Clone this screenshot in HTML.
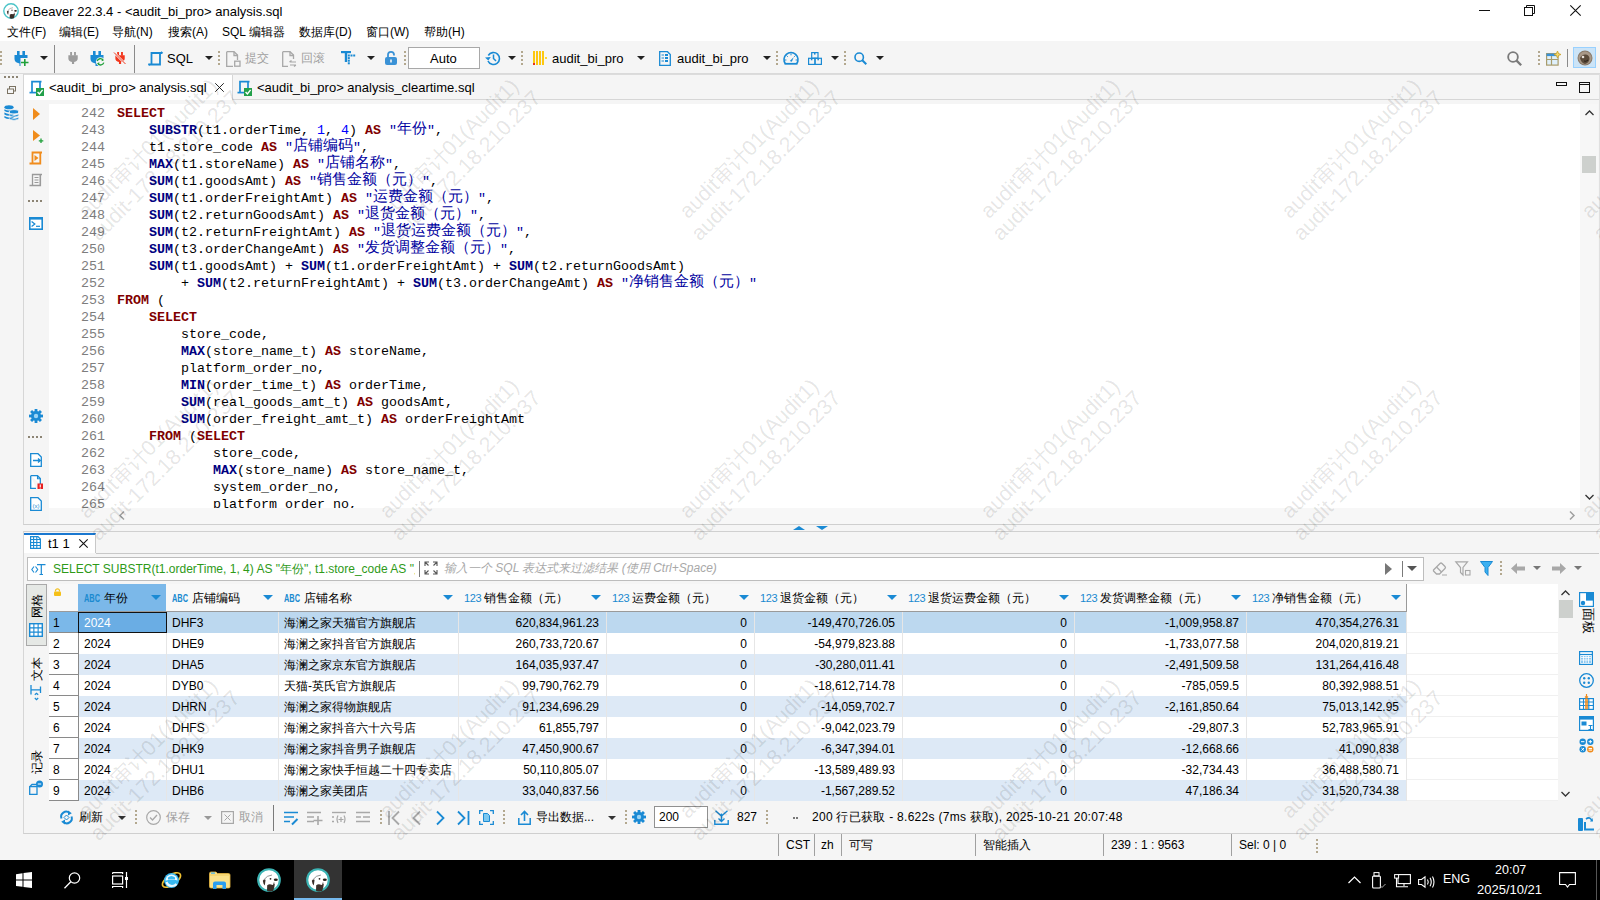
<!DOCTYPE html><html><head><meta charset="utf-8"><style>
*{box-sizing:border-box}
html,body{margin:0;padding:0}
body{width:1600px;height:900px;overflow:hidden;position:relative;background:#f5f5f5;font-family:"Liberation Sans",sans-serif;font-size:12px;color:#000}
.abs{position:absolute}
.t{position:absolute;white-space:nowrap;line-height:1.2}
.code{position:absolute;left:49px;top:104px;width:1531px;height:404px;background:#fff;overflow:hidden}
.ln{position:absolute;left:0;width:56px;text-align:right;font-family:"Liberation Mono",monospace;font-size:13.33px;color:#7d7d7d;line-height:17px;height:17px}
.cl{position:absolute;left:68px;font-family:"Liberation Mono",monospace;font-size:13.33px;color:#000;line-height:17px;height:17px;white-space:pre}
.k{color:#7f0000;font-weight:bold}
.f{color:#000080;font-weight:bold}
.s{color:#0000a0}
.n{color:#0000ff}
.cj{font-size:15px;letter-spacing:0;position:relative;top:-1px;}
.grid{position:absolute;left:49px;top:584px;width:1509px;height:217px;background:#fff;overflow:hidden}
.hc{position:absolute;top:0;height:28px;border-right:1px solid #9a9a9a;border-bottom:1px solid #9a9a9a;background:#f8f8f8}
.cell{position:absolute;height:21px;line-height:23px;white-space:nowrap;overflow:hidden;font-size:12px}
.ic{overflow:visible}
.wm{position:absolute;width:320px;height:47.2px;text-align:center;white-space:nowrap;font-size:21.3px;line-height:23.6px;color:rgba(0,0,0,0.11);transform-origin:50% 50%;transform:rotate(-45deg);pointer-events:none}
</style></head><body>
<div class="abs" style="left:0;top:0;width:1600px;height:41px;background:#fff"></div>
<svg class="ic" style="position:absolute;left:3px;top:3px;" width="16" height="16" viewBox="0 0 24 24"><circle cx="12" cy="12" r="10.8" fill="#fff" stroke="#4cc4c8" stroke-width="2.1"/><path d="M10.2 17.2 Q12.5 15.6 15.5 17 L17.8 15.8 Q17.6 19.5 16.2 23 Q12.5 24 10 22.8 Z" fill="#3a2e28"/><path d="M5.8 12.8 Q7 11 8.6 11.8 L7.8 17.5 Q6.4 16.5 5.8 12.8Z" fill="#3a2e28"/><ellipse cx="18.8" cy="11.8" rx="2" ry="1.3" fill="#2a2018"/><circle cx="13.5" cy="10.8" r="0.9" fill="#2a2018"/><path d="M6.8 11.8 Q10 7.3 15 7" stroke="#666" stroke-width="0.7" fill="none"/><path d="M17 14.5 L16.5 18" stroke="#3a2e28" stroke-width="0.8"/></svg>
<div class="t" style="left:23px;top:4px;font-size:13px;color:#000">DBeaver 22.3.4 - &lt;audit_bi_pro&gt; analysis.sql</div>
<svg class="ic" style="position:absolute;left:1479px;top:10px;" width="11" height="1" viewBox="0 0 11 1"><rect width="11" height="1" fill="#111"/></svg>
<svg class="ic" style="position:absolute;left:1524px;top:5px;" width="11" height="11" viewBox="0 0 11 11"><rect x="0.5" y="2.5" width="8" height="8" stroke="#111" fill="none"/><path d="M2.5 2.5V0.5H10.5V8.5H8.5" stroke="#111" fill="none"/></svg>
<svg class="ic" style="position:absolute;left:1570px;top:5px;" width="11" height="11" viewBox="0 0 11 11"><path d="M0.3 0.3L10.7 10.7M10.7 0.3L0.3 10.7" stroke="#111" stroke-width="1.1"/></svg>
<div class="t" style="left:7px;top:25px;font-size:12px">文件(F)</div>
<div class="t" style="left:59px;top:25px;font-size:12px">编辑(E)</div>
<div class="t" style="left:112px;top:25px;font-size:12px">导航(N)</div>
<div class="t" style="left:168px;top:25px;font-size:12px">搜索(A)</div>
<div class="t" style="left:222px;top:25px;font-size:12px">SQL 编辑器</div>
<div class="t" style="left:299px;top:25px;font-size:12px">数据库(D)</div>
<div class="t" style="left:366px;top:25px;font-size:12px">窗口(W)</div>
<div class="t" style="left:424px;top:25px;font-size:12px">帮助(H)</div>
<div class="abs" style="left:0;top:41px;width:1600px;height:33px;background:#f5f5f5;border-bottom:1px solid #dadada"></div>
<svg class="ic" style="position:absolute;left:0px;top:51px;" width="2" height="14" viewBox="0 0 2 14"><rect x="0" y="0" width="2" height="2" fill="#b3a88f"/><rect x="0" y="4" width="2" height="2" fill="#b3a88f"/><rect x="0" y="8" width="2" height="2" fill="#b3a88f"/><rect x="0" y="12" width="2" height="2" fill="#b3a88f"/></svg>
<svg class="ic" style="position:absolute;left:14px;top:51px;" width="15" height="15" viewBox="0 0 15 15"><rect x="3" y="0" width="2.6" height="4.5" fill="#1a8ad4"/><rect x="8.4" y="0" width="2.6" height="4.5" fill="#1a8ad4"/><path d="M0.5 4 H13.5 V8 Q13.5 11.5 8.5 12.5 V15 H5.5 V12.5 Q0.5 11.5 0.5 8 Z" fill="#1a8ad4"/><rect x="6.5" y="7" width="8.5" height="8" fill="#f5f5f5"/><path d="M10.8 8v7M7 11.5h7.5" stroke="#1fa03a" stroke-width="1.6"/></svg>
<svg class="ic" style="position:absolute;left:40px;top:56px;" width="8" height="4" viewBox="0 0 8 4"><path d="M0 0H8L4.0 4Z" fill="#222"/></svg>
<div style="position:absolute;left:54px;top:45px;width:1px;height:28px;background:#8a8a8a"></div>
<svg class="ic" style="position:absolute;left:68px;top:52px;" width="10" height="12" viewBox="0 0 10 12"><g transform="scale(0.72,0.8)"><rect x="3" y="0" width="2.6" height="4.5" fill="#9c9c9c"/><rect x="8.4" y="0" width="2.6" height="4.5" fill="#9c9c9c"/><path d="M0.5 4 H13.5 V8 Q13.5 11.5 8.5 12.5 V15 H5.5 V12.5 Q0.5 11.5 0.5 8 Z" fill="#9c9c9c"/></g></svg>
<svg class="ic" style="position:absolute;left:90px;top:51px;" width="15" height="15" viewBox="0 0 15 15"><rect x="3" y="0" width="2.6" height="4.5" fill="#1a8ad4"/><rect x="8.4" y="0" width="2.6" height="4.5" fill="#1a8ad4"/><path d="M0.5 4 H13.5 V8 Q13.5 11.5 8.5 12.5 V15 H5.5 V12.5 Q0.5 11.5 0.5 8 Z" fill="#1a8ad4"/><circle cx="10.5" cy="10.8" r="4.6" fill="#f5f5f5"/><path d="M7.2 10 A3.3 3.3 0 0 1 13 9" stroke="#1fa03a" stroke-width="1.4" fill="none"/><path d="M13.8 11.6 A3.3 3.3 0 0 1 8 12.6" stroke="#1fa03a" stroke-width="1.4" fill="none"/><path d="M12 7.5l2 1.8-2.4.9z M9 14l-2-1.8 2.4-.9z" fill="#1fa03a"/></svg>
<svg class="ic" style="position:absolute;left:114px;top:52px;" width="12" height="12" viewBox="0 0 12 12"><g transform="translate(1,0) scale(0.72,0.8)"><rect x="3" y="0" width="2.6" height="4.5" fill="#f2361c"/><rect x="8.4" y="0" width="2.6" height="4.5" fill="#f2361c"/><path d="M0.5 4 H13.5 V8 Q13.5 11.5 8.5 12.5 V15 H5.5 V12.5 Q0.5 11.5 0.5 8 Z" fill="#f2361c"/></g><path d="M0 0.5L11.5 12" stroke="#f5f5f5" stroke-width="2.2"/><path d="M0 0.5L11.5 12" stroke="#f2361c" stroke-width="1"/></svg>
<div style="position:absolute;left:134px;top:45px;width:1px;height:28px;background:#8a8a8a"></div>
<svg class="ic" style="position:absolute;left:148px;top:51px;" width="15" height="15" viewBox="0 0 15 15"><path d="M3.5 13 V2 H14" stroke="#1a8ad4" stroke-width="1.8" fill="none"/><path d="M12 2 V13.5 H0.5" stroke="#1a8ad4" stroke-width="1.8" fill="none"/><path d="M13 0.8 l1.8 1.4" stroke="#1a8ad4" stroke-width="1.2"/><path d="M0.5 12.8 l1.2 1.6" stroke="#1a8ad4" stroke-width="1.2"/></svg>
<div class="t" style="left:167px;top:51px;font-size:13px">SQL</div>
<svg class="ic" style="position:absolute;left:205px;top:56px;" width="8" height="4" viewBox="0 0 8 4"><path d="M0 0H8L4.0 4Z" fill="#222"/></svg>
<svg class="ic" style="position:absolute;left:218px;top:51px;" width="2" height="14" viewBox="0 0 2 14"><rect x="0" y="0" width="2" height="2" fill="#b3a88f"/><rect x="0" y="4" width="2" height="2" fill="#b3a88f"/><rect x="0" y="8" width="2" height="2" fill="#b3a88f"/><rect x="0" y="12" width="2" height="2" fill="#b3a88f"/></svg>
<svg class="ic" style="position:absolute;left:226px;top:51px;" width="15" height="16" viewBox="0 0 15 16"><path d="M0.7 0.7H8L11.5 4V9M7 15.3H0.7V0.7" stroke="#a8a8a8" stroke-width="1.3" fill="none"/><path d="M8 0.7V4.5H11.5" stroke="#a8a8a8" stroke-width="1.3" fill="none"/><rect x="8.7" y="10.2" width="5.3" height="5" stroke="#a8a8a8" stroke-width="1.3" fill="none"/></svg>
<div class="t" style="left:245px;top:51px;font-size:12px;color:#a0a0a0">提交</div>
<svg class="ic" style="position:absolute;left:282px;top:51px;" width="15" height="16" viewBox="0 0 15 16"><path d="M0.7 0.7H8L11.5 4V8M6 15.3H0.7V0.7" stroke="#a8a8a8" stroke-width="1.3" fill="none"/><path d="M8 0.7V4.5H11.5" stroke="#a8a8a8" stroke-width="1.3" fill="none"/><path d="M7.5 11H14M7.5 11l2-1.5M8 14H14M14 14l-2 1.5" stroke="#a8a8a8" stroke-width="1.2" fill="none"/></svg>
<div class="t" style="left:301px;top:51px;font-size:12px;color:#a0a0a0">回滚</div>
<svg class="ic" style="position:absolute;left:341px;top:51px;" width="15" height="15" viewBox="0 0 15 15"><rect x="0" y="0" width="10" height="2.2" fill="#1a8ad4"/><rect x="3.8" y="0" width="2.4" height="11" fill="#1a8ad4"/><rect x="6.8" y="3.5" width="2" height="2" fill="#1a8ad4"/><rect x="6.8" y="6.1" width="2" height="2" fill="#1a8ad4"/><rect x="6.8" y="8.7" width="2" height="2" fill="#1a8ad4"/><rect x="6.8" y="11.3" width="2" height="2" fill="#1a8ad4"/><rect x="9.5" y="3.5" width="2" height="2" fill="#1a8ad4"/><rect x="12.2" y="3.5" width="2" height="2" fill="#1a8ad4"/></svg>
<svg class="ic" style="position:absolute;left:367px;top:56px;" width="8" height="4" viewBox="0 0 8 4"><path d="M0 0H8L4.0 4Z" fill="#222"/></svg>
<svg class="ic" style="position:absolute;left:385px;top:51px;" width="12" height="14" viewBox="0 0 12 14"><path d="M3 6 V3.8 A3 3 0 0 1 9 3.8 V4.5" stroke="#3a92d6" stroke-width="1.8" fill="none"/><rect x="0" y="6" width="12" height="8" rx="2" fill="#3a92d6"/><rect x="5.2" y="8.5" width="1.6" height="3" fill="#f5f5f5"/></svg>
<svg class="ic" style="position:absolute;left:404px;top:51px;" width="2" height="14" viewBox="0 0 2 14"><rect x="0" y="0" width="2" height="2" fill="#b3a88f"/><rect x="0" y="4" width="2" height="2" fill="#b3a88f"/><rect x="0" y="8" width="2" height="2" fill="#b3a88f"/><rect x="0" y="12" width="2" height="2" fill="#b3a88f"/></svg>
<div class="abs" style="left:408px;top:47px;width:72px;height:22px;background:#fff;border:1px solid #a8a8a8"></div>
<div class="t" style="left:430px;top:51px;font-size:13px">Auto</div>
<svg class="ic" style="position:absolute;left:484px;top:51px;" width="16" height="15" viewBox="-1 0 16 15"><path d="M3.3 4.5 A6 6 0 1 1 3 10" stroke="#1a8ad4" stroke-width="1.6" fill="none"/><path d="M0 6.5 L3.3 9.5 L5.8 6 Z" fill="#1a8ad4"/><path d="M8.5 3.5V7.5L11 10" stroke="#1a8ad4" stroke-width="1.5" fill="none"/></svg>
<svg class="ic" style="position:absolute;left:508px;top:56px;" width="8" height="4" viewBox="0 0 8 4"><path d="M0 0H8L4.0 4Z" fill="#222"/></svg>
<svg class="ic" style="position:absolute;left:521px;top:51px;" width="2" height="14" viewBox="0 0 2 14"><rect x="0" y="0" width="2" height="2" fill="#b3a88f"/><rect x="0" y="4" width="2" height="2" fill="#b3a88f"/><rect x="0" y="8" width="2" height="2" fill="#b3a88f"/><rect x="0" y="12" width="2" height="2" fill="#b3a88f"/></svg>
<svg class="ic" style="position:absolute;left:533px;top:51px;" width="14" height="14" viewBox="0 0 14 14"><rect x="0" y="0" width="2" height="14" fill="#fdc810"/><rect x="3" y="0" width="2" height="14" fill="#fdc810"/><rect x="6" y="0" width="2" height="14" fill="#fdc810"/><rect x="9" y="0" width="2" height="14" fill="#fdc810"/><rect x="0" y="12" width="2" height="2" fill="#e8301c"/><rect x="12" y="6" width="2" height="2" fill="#fdd830"/></svg>
<div class="t" style="left:552px;top:51px;font-size:13px">audit_bi_pro</div>
<svg class="ic" style="position:absolute;left:637px;top:56px;" width="8" height="4" viewBox="0 0 8 4"><path d="M0 0H8L4.0 4Z" fill="#222"/></svg>
<svg class="ic" style="position:absolute;left:659px;top:51px;" width="12" height="15" viewBox="0 0 12 15"><path d="M0.7 0.7H8.5L11.3 3.5V14.3H0.7Z" stroke="#1a8ad4" stroke-width="1.3" fill="none"/><path d="M2.5 4h2.5M2.5 7h2.5M2.5 10h2.5" stroke="#1a8ad4" stroke-width="1.2"/><rect x="6" y="3" width="3" height="2" fill="#1a8ad4"/><rect x="6" y="6" width="3" height="2" fill="#1a8ad4"/><rect x="6" y="9" width="3" height="2" fill="#1a8ad4"/></svg>
<div class="t" style="left:677px;top:51px;font-size:13px">audit_bi_pro</div>
<svg class="ic" style="position:absolute;left:763px;top:56px;" width="8" height="4" viewBox="0 0 8 4"><path d="M0 0H8L4.0 4Z" fill="#222"/></svg>
<svg class="ic" style="position:absolute;left:776px;top:51px;" width="2" height="14" viewBox="0 0 2 14"><rect x="0" y="0" width="2" height="2" fill="#b3a88f"/><rect x="0" y="4" width="2" height="2" fill="#b3a88f"/><rect x="0" y="8" width="2" height="2" fill="#b3a88f"/><rect x="0" y="12" width="2" height="2" fill="#b3a88f"/></svg>
<svg class="ic" style="position:absolute;left:783px;top:51px;" width="16" height="14" viewBox="0 0 16 14"><path d="M2.3 12.6 A7 7 0 1 1 13.7 12.6" stroke="#1a8ad4" stroke-width="1.6" fill="none"/><path d="M1.5 12.8H14.5" stroke="#1a8ad4" stroke-width="1.8"/><path d="M8 2.5v1.8M3.6 4.6l1.2 1.2M12.4 4.6l-1.2 1.2M1.8 9h1.6M12.6 9h1.6" stroke="#1a8ad4" stroke-width="1"/><path d="M6.8 10 L10.8 6 L8.8 10.8Z" fill="#1a8ad4"/></svg>
<svg class="ic" style="position:absolute;left:808px;top:52px;" width="14" height="13" viewBox="0 0 14 13"><rect x="3.7" y="0.6" width="6.3" height="5.6" stroke="#1a8ad4" stroke-width="1.2" fill="none"/><rect x="0.6" y="6.3" width="6.4" height="6.1" stroke="#1a8ad4" stroke-width="1.2" fill="none"/><rect x="7" y="6.3" width="6.4" height="6.1" stroke="#1a8ad4" stroke-width="1.2" fill="none"/><rect x="6" y="0.6" width="1.5" height="2" fill="#1a8ad4"/><rect x="2.9" y="6.3" width="1.5" height="2" fill="#1a8ad4"/><rect x="9.4" y="6.3" width="1.5" height="2" fill="#1a8ad4"/></svg>
<svg class="ic" style="position:absolute;left:831px;top:56px;" width="8" height="4" viewBox="0 0 8 4"><path d="M0 0H8L4.0 4Z" fill="#222"/></svg>
<svg class="ic" style="position:absolute;left:844px;top:51px;" width="2" height="14" viewBox="0 0 2 14"><rect x="0" y="0" width="2" height="2" fill="#b3a88f"/><rect x="0" y="4" width="2" height="2" fill="#b3a88f"/><rect x="0" y="8" width="2" height="2" fill="#b3a88f"/><rect x="0" y="12" width="2" height="2" fill="#b3a88f"/></svg>
<svg class="ic" style="position:absolute;left:854px;top:52px;" width="13" height="13" viewBox="0 0 13 13"><circle cx="5.2" cy="5.2" r="4.2" stroke="#1a8ad4" stroke-width="1.6" fill="none"/><path d="M8.3 8.3L12.3 12.3" stroke="#1a8ad4" stroke-width="2"/></svg>
<svg class="ic" style="position:absolute;left:876px;top:56px;" width="8" height="4" viewBox="0 0 8 4"><path d="M0 0H8L4.0 4Z" fill="#222"/></svg>
<svg class="ic" style="position:absolute;left:1507px;top:51px;" width="15" height="15" viewBox="0 0 13 13"><circle cx="5.2" cy="5.2" r="4.2" stroke="#7a7a7a" stroke-width="1.6" fill="none"/><path d="M8.3 8.3L12.3 12.3" stroke="#7a7a7a" stroke-width="2"/></svg>
<svg class="ic" style="position:absolute;left:1538px;top:51px;" width="2" height="14" viewBox="0 0 2 14"><rect x="0" y="0" width="2" height="2" fill="#b3a88f"/><rect x="0" y="4" width="2" height="2" fill="#b3a88f"/><rect x="0" y="8" width="2" height="2" fill="#b3a88f"/><rect x="0" y="12" width="2" height="2" fill="#b3a88f"/></svg>
<svg class="ic" style="position:absolute;left:1546px;top:51px;" width="15" height="15" viewBox="0 0 15 15"><rect x="0.6" y="2.6" width="11.5" height="11.5" stroke="#a89c6c" stroke-width="1.2" fill="#dff0fb"/><rect x="0.6" y="2.6" width="11.5" height="2.5" fill="#3a92d6"/><path d="M0.6 8.5H12M5.5 5V14" stroke="#a89c6c" stroke-width="1.2"/><path d="M11.5 0 L12.6 2.6 L15 3.5 L12.6 4.4 L11.5 7 L10.4 4.4 L8 3.5 L10.4 2.6Z" fill="#f5d76e" stroke="#c9a227" stroke-width="0.8"/></svg>
<div style="position:absolute;left:1567px;top:49px;width:1px;height:18px;background:#8a8a8a"></div>
<div class="abs" style="left:1573px;top:47px;width:23px;height:21px;background:#cce4f7;border:1px solid #99d1ff"></div>
<svg class="ic" style="position:absolute;left:1577px;top:50px;" width="16" height="16" viewBox="0 0 16 16"><circle cx="8" cy="8" r="7.5" fill="#8a7a6a"/><circle cx="8" cy="8" r="6.5" fill="#a89888"/><path d="M3 8 Q5 4 9 4.5 Q12.5 5 12.5 9 Q12 13 8 14 Q4 13 3 8Z" fill="#5a4a3a"/><circle cx="6" cy="7" r="1.3" fill="#e8e0d8"/><path d="M7 11 Q9 12 11 10" stroke="#2a2018" fill="none"/></svg>
<svg class="ic" style="position:absolute;left:4px;top:76px;" width="14" height="2" viewBox="0 0 14 2"><rect x="0" y="0" width="2" height="2" fill="#8c8474"/><rect x="4" y="0" width="2" height="2" fill="#8c8474"/><rect x="8" y="0" width="2" height="2" fill="#8c8474"/><rect x="12" y="0" width="2" height="2" fill="#8c8474"/></svg>
<svg class="ic" style="position:absolute;left:7px;top:86px;" width="9" height="8" viewBox="0 0 9 8"><rect x="2.5" y="0.5" width="6" height="4.5" stroke="#7a7262" fill="#f5f5f5"/><rect x="0.5" y="3" width="6" height="4.5" stroke="#7a7262" fill="#f5f5f5"/></svg>
<svg class="ic" style="position:absolute;left:4px;top:105px;" width="15" height="15" viewBox="0 0 15 15"><ellipse cx="5" cy="2.3" rx="4.6" ry="2" fill="#1a8ad4"/><path d="M0.4 4.2 Q5 7 9.6 4.2V6 Q5 8.6 0.4 6Z M0.4 7.6 Q5 10.4 9.6 7.6V9.4 Q5 12 0.4 9.4Z M0.4 11 Q5 13.8 9.6 11V12.8 Q5 15.4 0.4 12.8Z" fill="#1a8ad4"/><ellipse cx="10" cy="6.8" rx="4.7" ry="2.2" fill="#1a8ad4" stroke="#f5f5f5" stroke-width="1"/><path d="M5.3 9 Q10 11.8 14.7 9V10.8 Q10 13.4 5.3 10.8Z M5.3 12.2 Q10 15 14.7 12.2V14 Q10 16.4 5.3 14Z" fill="#1a8ad4" stroke="#f5f5f5" stroke-width="0.6"/></svg>
<div class="abs" style="left:23px;top:74px;width:1577px;height:451px;border-left:1px solid #d6d6d6;border-bottom:1px solid #cfcfcf;background:#f5f5f5"></div>
<div class="abs" style="left:24px;top:74px;width:1575px;height:1px;background:#dcdcdc"></div>
<div class="abs" style="left:24px;top:75px;width:208px;height:25px;background:#fff"></div>
<div class="abs" style="left:232px;top:75px;width:1px;height:25px;background:#d6d6d6"></div>
<div class="abs" style="left:233px;top:99px;width:1366px;height:1px;background:#d6d6d6"></div>
<div class="abs" style="left:1599px;top:74px;width:1px;height:451px;background:#e0e0e0"></div>
<svg class="ic" style="position:absolute;left:29px;top:80px;" width="16" height="16" viewBox="0 0 16 16"><path d="M3 12.5 V1.7 H12.5" stroke="#1a8ad4" stroke-width="1.7" fill="none"/><path d="M11 1.5 V8" stroke="#1a8ad4" stroke-width="1.7" fill="none"/><path d="M0.5 12.6 H7" stroke="#1a8ad4" stroke-width="1.7" fill="none"/><rect x="7" y="8" width="8" height="8" fill="#22a04a"/><path d="M8.6 12 L10.4 14 L13.6 9.8" stroke="#fff" stroke-width="1.4" fill="none"/></svg>
<svg class="ic" style="position:absolute;left:237px;top:80px;" width="16" height="16" viewBox="0 0 16 16"><path d="M3 12.5 V1.7 H12.5" stroke="#1a8ad4" stroke-width="1.7" fill="none"/><path d="M11 1.5 V8" stroke="#1a8ad4" stroke-width="1.7" fill="none"/><path d="M0.5 12.6 H7" stroke="#1a8ad4" stroke-width="1.7" fill="none"/><rect x="7" y="8" width="8" height="8" fill="#22a04a"/><path d="M8.6 12 L10.4 14 L13.6 9.8" stroke="#fff" stroke-width="1.4" fill="none"/></svg>
<div class="t" style="left:49px;top:80px;font-size:13px">&lt;audit_bi_pro&gt; analysis.sql</div>
<svg class="ic" style="position:absolute;left:215px;top:83px;" width="9" height="9" viewBox="0 0 11 11"><path d="M0.3 0.3L10.7 10.7M10.7 0.3L0.3 10.7" stroke="#111" stroke-width="1.1"/></svg>
<div class="t" style="left:257px;top:80px;font-size:13px">&lt;audit_bi_pro&gt; analysis_cleartime.sql</div>
<svg class="ic" style="position:absolute;left:1556px;top:82px;" width="11" height="4" viewBox="0 0 11 4"><rect x="0.5" y="0.5" width="10" height="3" stroke="#111" fill="none"/></svg>
<svg class="ic" style="position:absolute;left:1579px;top:82px;" width="11" height="11" viewBox="0 0 11 11"><rect x="0.5" y="0.5" width="10" height="10" stroke="#111" fill="none"/><path d="M0.5 2.5H10.5" stroke="#111"/></svg>
<svg class="ic" style="position:absolute;left:33px;top:108px;" width="7" height="12" viewBox="0 0 7 12"><path d="M0 0L7 6L0 12Z" fill="#f08c1c"/></svg>
<svg class="ic" style="position:absolute;left:33px;top:130px;" width="11" height="13" viewBox="0 0 11 13"><path d="M0 0L7 5.5L0 11Z" fill="#f08c1c"/><path d="M8 8.5v4.5M5.8 10.8h4.5" stroke="#1fa03a" stroke-width="1.3"/></svg>
<svg class="ic" style="position:absolute;left:29px;top:151px;" width="14" height="14" viewBox="0 0 14 14"><path d="M3.5 12 V1.5 H13" stroke="#f08c1c" stroke-width="1.8" fill="none"/><path d="M11.3 1.5 V12.5 H0.5" stroke="#f08c1c" stroke-width="1.8" fill="none"/><path d="M5.5 4 L9.5 7 L5.5 10Z" fill="#f08c1c"/></svg>
<svg class="ic" style="position:absolute;left:29px;top:173px;" width="14" height="14" viewBox="0 0 14 14"><path d="M3.5 12 V1.5 H13" stroke="#9a9a9a" stroke-width="1.3" fill="none"/><path d="M11.3 1.5 V12.5 H0.5" stroke="#9a9a9a" stroke-width="1.6" fill="none"/><path d="M5.5 4.5h4M5.5 7h4M5.5 9.5h4" stroke="#9a9a9a" stroke-width="1"/></svg>
<svg class="ic" style="position:absolute;left:28px;top:200px;" width="14" height="2" viewBox="0 0 14 2"><rect x="0" y="0" width="2" height="2" fill="#8c8474"/><rect x="4" y="0" width="2" height="2" fill="#8c8474"/><rect x="8" y="0" width="2" height="2" fill="#8c8474"/><rect x="12" y="0" width="2" height="2" fill="#8c8474"/></svg>
<svg class="ic" style="position:absolute;left:29px;top:217px;" width="14" height="13" viewBox="0 0 14 13"><rect x="0.8" y="0.8" width="12.4" height="11.4" stroke="#1a8ad4" stroke-width="1.6" fill="#fff"/><rect x="0" y="0" width="14" height="2.6" fill="#1a8ad4"/><path d="M2.6 4.5 L5.8 7 L2.6 9.5" stroke="#1a8ad4" stroke-width="1.3" fill="none"/><path d="M7 9.3H11" stroke="#1a8ad4" stroke-width="1.2"/></svg>
<svg class="ic" style="position:absolute;left:29px;top:409px;" width="14" height="14" viewBox="0 0 14 14"><rect x="5.6" y="0" width="2.8" height="3.2" fill="#1a8ad4" transform="rotate(0 7 7)"/><rect x="5.6" y="0" width="2.8" height="3.2" fill="#1a8ad4" transform="rotate(45 7 7)"/><rect x="5.6" y="0" width="2.8" height="3.2" fill="#1a8ad4" transform="rotate(90 7 7)"/><rect x="5.6" y="0" width="2.8" height="3.2" fill="#1a8ad4" transform="rotate(135 7 7)"/><rect x="5.6" y="0" width="2.8" height="3.2" fill="#1a8ad4" transform="rotate(180 7 7)"/><rect x="5.6" y="0" width="2.8" height="3.2" fill="#1a8ad4" transform="rotate(225 7 7)"/><rect x="5.6" y="0" width="2.8" height="3.2" fill="#1a8ad4" transform="rotate(270 7 7)"/><rect x="5.6" y="0" width="2.8" height="3.2" fill="#1a8ad4" transform="rotate(315 7 7)"/><circle cx="7" cy="7" r="5" fill="#1a8ad4"/><circle cx="7" cy="7" r="2.2" fill="#9bd4f5"/></svg>
<svg class="ic" style="position:absolute;left:28px;top:436px;" width="14" height="2" viewBox="0 0 14 2"><rect x="0" y="0" width="2" height="2" fill="#8c8474"/><rect x="4" y="0" width="2" height="2" fill="#8c8474"/><rect x="8" y="0" width="2" height="2" fill="#8c8474"/><rect x="12" y="0" width="2" height="2" fill="#8c8474"/></svg>
<svg class="ic" style="position:absolute;left:30px;top:453px;" width="12" height="14" viewBox="0 0 12 14"><path d="M0.7 0.7H8L11.3 4V13.3H0.7Z" stroke="#1a8ad4" stroke-width="1.3" fill="#fff"/><path d="M3 7.5H10M8 5.5l2.3 2-2.3 2" stroke="#1a8ad4" stroke-width="1.3" fill="none"/></svg>
<svg class="ic" style="position:absolute;left:30px;top:475px;" width="13" height="14" viewBox="0 0 13 14"><path d="M0.7 0.7H7.5L10.3 3.5V9M6 13.3H0.7V0.7" stroke="#1a8ad4" stroke-width="1.3" fill="#fff"/><path d="M7.5 0.7V3.8H10.3" stroke="#1a8ad4" stroke-width="1.1" fill="none"/><rect x="7.5" y="8.5" width="5.5" height="5.5" fill="#e82020"/><path d="M10.25 9.5v2.5M10.25 12.5v1" stroke="#fff" stroke-width="1.1"/></svg>
<svg class="ic" style="position:absolute;left:30px;top:497px;" width="12" height="14" viewBox="0 0 12 14"><path d="M0.7 0.7H8L11.3 4V13.3H0.7Z" stroke="#1a8ad4" stroke-width="1.3" fill="#fff"/><text x="6" y="10.5" font-size="6" text-anchor="middle" fill="#1a8ad4" font-family="Liberation Sans">(x)</text></svg>
<div class="code">
<div class="ln" style="top:1px">242</div><div class="cl" style="top:1px"><span class="k">SELECT</span></div>
<div class="ln" style="top:18px">243</div><div class="cl" style="top:18px">    <span class="f">SUBSTR</span>(t1.orderTime, <span class="n">1</span>, <span class="n">4</span>) <span class="k">AS</span> <span class="s">&quot;<span class="cj">年份</span>&quot;</span>,</div>
<div class="ln" style="top:35px">244</div><div class="cl" style="top:35px">    t1.store_code <span class="k">AS</span> <span class="s">&quot;<span class="cj">店铺编码</span>&quot;</span>,</div>
<div class="ln" style="top:52px">245</div><div class="cl" style="top:52px">    <span class="f">MAX</span>(t1.storeName) <span class="k">AS</span> <span class="s">&quot;<span class="cj">店铺名称</span>&quot;</span>,</div>
<div class="ln" style="top:69px">246</div><div class="cl" style="top:69px">    <span class="f">SUM</span>(t1.goodsAmt) <span class="k">AS</span> <span class="s">&quot;<span class="cj">销售金额（元）</span>&quot;</span>,</div>
<div class="ln" style="top:86px">247</div><div class="cl" style="top:86px">    <span class="f">SUM</span>(t1.orderFreightAmt) <span class="k">AS</span> <span class="s">&quot;<span class="cj">运费金额（元）</span>&quot;</span>,</div>
<div class="ln" style="top:103px">248</div><div class="cl" style="top:103px">    <span class="f">SUM</span>(t2.returnGoodsAmt) <span class="k">AS</span> <span class="s">&quot;<span class="cj">退货金额（元）</span>&quot;</span>,</div>
<div class="ln" style="top:120px">249</div><div class="cl" style="top:120px">    <span class="f">SUM</span>(t2.returnFreightAmt) <span class="k">AS</span> <span class="s">&quot;<span class="cj">退货运费金额（元）</span>&quot;</span>,</div>
<div class="ln" style="top:137px">250</div><div class="cl" style="top:137px">    <span class="f">SUM</span>(t3.orderChangeAmt) <span class="k">AS</span> <span class="s">&quot;<span class="cj">发货调整金额（元）</span>&quot;</span>,</div>
<div class="ln" style="top:154px">251</div><div class="cl" style="top:154px">    <span class="f">SUM</span>(t1.goodsAmt) + <span class="f">SUM</span>(t1.orderFreightAmt) + <span class="f">SUM</span>(t2.returnGoodsAmt)</div>
<div class="ln" style="top:171px">252</div><div class="cl" style="top:171px">        + <span class="f">SUM</span>(t2.returnFreightAmt) + <span class="f">SUM</span>(t3.orderChangeAmt) <span class="k">AS</span> <span class="s">&quot;<span class="cj">净销售金额（元）</span>&quot;</span></div>
<div class="ln" style="top:188px">253</div><div class="cl" style="top:188px"><span class="k">FROM</span> (</div>
<div class="ln" style="top:205px">254</div><div class="cl" style="top:205px">    <span class="k">SELECT</span></div>
<div class="ln" style="top:222px">255</div><div class="cl" style="top:222px">        store_code,</div>
<div class="ln" style="top:239px">256</div><div class="cl" style="top:239px">        <span class="f">MAX</span>(store_name_t) <span class="k">AS</span> storeName,</div>
<div class="ln" style="top:256px">257</div><div class="cl" style="top:256px">        platform_order_no,</div>
<div class="ln" style="top:273px">258</div><div class="cl" style="top:273px">        <span class="f">MIN</span>(order_time_t) <span class="k">AS</span> orderTime,</div>
<div class="ln" style="top:290px">259</div><div class="cl" style="top:290px">        <span class="f">SUM</span>(real_goods_amt_t) <span class="k">AS</span> goodsAmt,</div>
<div class="ln" style="top:307px">260</div><div class="cl" style="top:307px">        <span class="f">SUM</span>(order_freight_amt_t) <span class="k">AS</span> orderFreightAmt</div>
<div class="ln" style="top:324px">261</div><div class="cl" style="top:324px">    <span class="k">FROM</span> (<span class="k">SELECT</span></div>
<div class="ln" style="top:341px">262</div><div class="cl" style="top:341px">            store_code,</div>
<div class="ln" style="top:358px">263</div><div class="cl" style="top:358px">            <span class="f">MAX</span>(store_name) <span class="k">AS</span> store_name_t,</div>
<div class="ln" style="top:375px">264</div><div class="cl" style="top:375px">            system_order_no,</div>
<div class="ln" style="top:392px">265</div><div class="cl" style="top:392px">            platform_order_no,</div>
</div>
<div class="abs" style="left:49px;top:508px;width:1531px;height:16px;background:#f7f7f7"></div>
<svg class="ic" style="position:absolute;left:119px;top:511px;" width="6" height="9" viewBox="0 0 6 9"><path d="M5 0.5L1 4.5L5 8.5" stroke="#a0a0a0" stroke-width="1.5" fill="none"/></svg>
<svg class="ic" style="position:absolute;left:1569px;top:511px;" width="6" height="9" viewBox="0 0 6 9"><path d="M1 0.5L5 4.5L1 8.5" stroke="#a0a0a0" stroke-width="1.5" fill="none"/></svg>
<div class="abs" style="left:1580px;top:104px;width:18px;height:404px;background:#f7f7f7"></div>
<svg class="ic" style="position:absolute;left:1585px;top:110px;" width="9" height="6" viewBox="0 0 9 6"><path d="M0.5 5L4.5 1L8.5 5" stroke="#333" stroke-width="1.3" fill="none"/></svg>
<div class="abs" style="left:1582px;top:156px;width:14px;height:17px;background:#cdd0cd"></div>
<svg class="ic" style="position:absolute;left:1585px;top:494px;" width="9" height="6" viewBox="0 0 9 6"><path d="M0.5 1L4.5 5L8.5 1" stroke="#333" stroke-width="1.3" fill="none"/></svg>
<svg class="ic" style="position:absolute;left:793px;top:526px;" width="12" height="4" viewBox="0 0 12 4"><path d="M0 4H12L6 0Z" fill="#1a8ad4"/></svg>
<svg class="ic" style="position:absolute;left:816px;top:526px;" width="12" height="4" viewBox="0 0 12 4"><path d="M0 0H12L6 4Z" fill="#1a8ad4"/></svg>
<div class="abs" style="left:23px;top:531px;width:1577px;height:303px;border-left:1px solid #d6d6d6;border-top:1px solid #d0d0d0;border-bottom:1px solid #cfcfcf;background:#f5f5f5"></div>
<div class="abs" style="left:24px;top:533px;width:72px;height:20px;background:#fff;border-top:2px solid #1a78d0;border-right:1px solid #c8c8c8"></div>
<div class="abs" style="left:96px;top:553px;width:1503px;height:1px;background:#c8c8c8"></div>
<svg class="ic" style="position:absolute;left:30px;top:536px;" width="11" height="13" viewBox="0 0 11 13"><path d="M0.6 0.6H8L10.4 3V12.4H0.6Z" stroke="#1a8ad4" stroke-width="1.2" fill="#fff"/><path d="M0.6 3.5H10.4M0.6 6.5H10.4M0.6 9.5H10.4M3.6 0.6V12.4M6.8 0.6V12.4" stroke="#1a8ad4" stroke-width="1.1"/></svg>
<div class="t" style="left:48px;top:536px;font-size:13px">t1 1</div>
<svg class="ic" style="position:absolute;left:79px;top:539px;" width="9" height="9" viewBox="0 0 9 9"><path d="M0.3 0.3L8.7 8.7M8.7 0.3L0.3 8.7" stroke="#111" stroke-width="1.1"/></svg>
<div class="abs" style="left:27px;top:557px;width:1397px;height:24px;background:#fff;border:1px solid #bdbdbd"></div>
<svg class="ic" style="position:absolute;left:31px;top:564px;" width="15" height="11" viewBox="0 0 15 11"><path d="M3 2.5L0.8 5.5L3 8.5M4.5 2.5L6.7 5.5L4.5 8.5" stroke="#1a8ad4" stroke-width="1.1" fill="none"/><path d="M6 0.6H14.5M10.3 0.6V10.5M8.5 10.5H12" stroke="#1a8ad4" stroke-width="1.2" fill="none"/></svg>
<div class="abs" style="left:53px;top:559px;width:362px;height:20px;overflow:hidden"><div class="t" style="left:0;top:3px;font-size:12px;color:#2e9a18">SELECT SUBSTR(t1.orderTime, 1, 4) AS "年份", t1.store_code AS "店铺编码"</div></div>
<div style="position:absolute;left:419px;top:561px;width:1px;height:16px;background:#7a7a7a"></div>
<svg class="ic" style="position:absolute;left:424px;top:561px;" width="14" height="14" viewBox="0 0 14 14"><path d="M1 5V1H5M9 1H13V5M13 9V13H9M5 13H1V9M1 1L4.5 4.5M13 1L9.5 4.5M13 13L9.5 9.5M1 13L4.5 9.5" stroke="#555" stroke-width="1.1" fill="none"/></svg>
<div class="t" style="left:444px;top:561px;font-size:12px;color:#a8a8a8;font-style:italic">输入一个 SQL 表达式来过滤结果 (使用 Ctrl+Space)</div>
<svg class="ic" style="position:absolute;left:1385px;top:563px;" width="7" height="12" viewBox="0 0 7 12"><path d="M0 0L7 6L0 12Z" fill="#777"/></svg>
<div style="position:absolute;left:1402px;top:561px;width:1px;height:16px;background:#7a7a7a"></div>
<svg class="ic" style="position:absolute;left:1407px;top:566px;" width="10" height="5" viewBox="0 0 10 5"><path d="M0 0H10L5.0 5Z" fill="#555"/></svg>
<svg class="ic" style="position:absolute;left:1432px;top:561px;" width="16" height="15" viewBox="0 0 16 15"><path d="M1.5 9 L8 2.5 Q9 1.5 10 2.5 L13 5.5 Q14 6.5 13 7.5 L7.5 13 H4.5 L1.5 10Z" stroke="#a8a8a8" stroke-width="1.3" fill="none"/><path d="M4.5 6 L9.5 11" stroke="#a8a8a8" stroke-width="1.3"/><path d="M10 14H15" stroke="#a8a8a8" stroke-width="1"/></svg>
<svg class="ic" style="position:absolute;left:1455px;top:561px;" width="16" height="15" viewBox="0 0 16 15"><path d="M0.8 0.8H12.5L8 6.5V14L5.5 11.5V6.5Z" stroke="#a8a8a8" stroke-width="1.2" fill="none"/><rect x="10.5" y="9.5" width="4.5" height="4.5" stroke="#a8a8a8" stroke-width="1.1" fill="none"/></svg>
<svg class="ic" style="position:absolute;left:1480px;top:561px;" width="13" height="15" viewBox="0 0 13 15"><path d="M0.5 0.5H12.5L8 6.5V14.5L5 11V6.5Z" fill="#3cb0f0" stroke="#1a8ad4" stroke-width="1"/></svg>
<svg class="ic" style="position:absolute;left:1500px;top:561px;" width="2" height="14" viewBox="0 0 2 14"><rect x="0" y="0" width="2" height="2" fill="#b3a88f"/><rect x="0" y="4" width="2" height="2" fill="#b3a88f"/><rect x="0" y="8" width="2" height="2" fill="#b3a88f"/><rect x="0" y="12" width="2" height="2" fill="#b3a88f"/></svg>
<svg class="ic" style="position:absolute;left:1511px;top:563px;" width="15" height="11" viewBox="0 0 15 11"><path d="M0 5.5L6 0V3.5H14V7.5H6V11Z" fill="#a8a8a8"/></svg>
<svg class="ic" style="position:absolute;left:1533px;top:566px;" width="8" height="4" viewBox="0 0 8 4"><path d="M0 0H8L4.0 4Z" fill="#777"/></svg>
<svg class="ic" style="position:absolute;left:1551px;top:563px;" width="15" height="11" viewBox="0 0 15 11"><path d="M15 5.5L9 0V3.5H1V7.5H9V11Z" fill="#a8a8a8"/></svg>
<svg class="ic" style="position:absolute;left:1574px;top:566px;" width="8" height="4" viewBox="0 0 8 4"><path d="M0 0H8L4.0 4Z" fill="#777"/></svg>
<div class="abs" style="left:26px;top:584px;width:21px;height:62px;background:#e5e8e5;border:1px solid #a9a9a9"></div>
<svg class="ic" style="position:absolute;left:29px;top:623px;" width="14" height="14" viewBox="0 0 14 14"><rect x="0.7" y="0.7" width="12.6" height="12.6" stroke="#1a8ad4" stroke-width="1.4" fill="#fff"/><path d="M4.866666666666666 0.6V13.4M0.6 4.866666666666666H13.4" stroke="#1a8ad4" stroke-width="1.1"/><path d="M9.133333333333333 0.6V13.4M0.6 9.133333333333333H13.4" stroke="#1a8ad4" stroke-width="1.1"/></svg>
<div class="t" style="left:25px;top:599px;font-size:12px;transform:rotate(-90deg);transform-origin:center;width:24px;height:14px;line-height:14px">网格</div>
<div class="t" style="left:25px;top:662px;font-size:12px;transform:rotate(-90deg);transform-origin:center;width:24px;height:14px;line-height:14px">文本</div>
<svg class="ic" style="position:absolute;left:30px;top:685px;" width="12" height="16" viewBox="0 0 12 16"><path d="M1 0V9.5M1 4.8H10.5M10.5 1.5V8" stroke="#1a8ad4" stroke-width="1.3" fill="none"/><path d="M4.8 9.8L6.5 8.2L8.2 9.8M4.8 13L6.5 14.6L8.2 13" stroke="#1a8ad4" stroke-width="1.2" fill="none"/></svg>
<div class="t" style="left:25px;top:755px;font-size:12px;transform:rotate(-90deg);transform-origin:center;width:24px;height:14px;line-height:14px">记录</div>
<svg class="ic" style="position:absolute;left:29px;top:780px;" width="14" height="15" viewBox="0 0 14 15"><path d="M0.7 14.3V6.7H8V14.3Z M0.7 6.7 L3 4.5H8" stroke="#1a8ad4" stroke-width="1.3" fill="none"/><circle cx="10.5" cy="4" r="3.5" fill="#1a8ad4"/><path d="M8.8 4h3.4" stroke="#fff" stroke-width="1"/></svg>
<div class="grid">
<div class="abs" style="left:29px;top:28px;width:1328px;height:21px;background:#bcd8ef"></div>
<div class="abs" style="left:1357px;top:48px;width:152px;height:1px;background:#f0f0f0"></div>
<div class="cell" style="left:0;top:28px;width:30px;background:#7bb8e9;border-bottom:1px solid #8a8a8a;border-right:1px solid #8a8a8a;padding-left:4px">1</div>
<div class="cell" style="left:29px;top:28px;width:89px;text-align:left;padding-left:6px;border-right:1px solid #e6e6e6;background:#6aade4;color:#fff;border:1px solid #111;line-height:21px;padding-left:5px">2024</div>
<div class="cell" style="left:117px;top:28px;width:113px;text-align:left;padding-left:6px;border-right:1px solid #e6e6e6;">DHF3</div>
<div class="cell" style="left:229px;top:28px;width:181px;text-align:left;padding-left:6px;border-right:1px solid #e6e6e6;">海澜之家天猫官方旗舰店</div>
<div class="cell" style="left:409px;top:28px;width:149px;text-align:right;padding-right:7px;border-right:1px solid #e6e6e6;">620,834,961.23</div>
<div class="cell" style="left:557px;top:28px;width:149px;text-align:right;padding-right:7px;border-right:1px solid #e6e6e6;">0</div>
<div class="cell" style="left:705px;top:28px;width:149px;text-align:right;padding-right:7px;border-right:1px solid #e6e6e6;">-149,470,726.05</div>
<div class="cell" style="left:853px;top:28px;width:173px;text-align:right;padding-right:7px;border-right:1px solid #e6e6e6;">0</div>
<div class="cell" style="left:1025px;top:28px;width:173px;text-align:right;padding-right:7px;border-right:1px solid #e6e6e6;">-1,009,958.87</div>
<div class="cell" style="left:1197px;top:28px;width:161px;text-align:right;padding-right:7px;border-right:1px solid #e6e6e6;">470,354,276.31</div>
<div class="abs" style="left:29px;top:49px;width:1328px;height:21px;background:#fff"></div>
<div class="abs" style="left:1357px;top:69px;width:152px;height:1px;background:#f0f0f0"></div>
<div class="cell" style="left:0;top:49px;width:30px;background:#fff;border-bottom:1px solid #8a8a8a;border-right:1px solid #8a8a8a;padding-left:4px">2</div>
<div class="cell" style="left:29px;top:49px;width:89px;text-align:left;padding-left:6px;border-right:1px solid #e6e6e6;">2024</div>
<div class="cell" style="left:117px;top:49px;width:113px;text-align:left;padding-left:6px;border-right:1px solid #e6e6e6;">DHE9</div>
<div class="cell" style="left:229px;top:49px;width:181px;text-align:left;padding-left:6px;border-right:1px solid #e6e6e6;">海澜之家抖音官方旗舰店</div>
<div class="cell" style="left:409px;top:49px;width:149px;text-align:right;padding-right:7px;border-right:1px solid #e6e6e6;">260,733,720.67</div>
<div class="cell" style="left:557px;top:49px;width:149px;text-align:right;padding-right:7px;border-right:1px solid #e6e6e6;">0</div>
<div class="cell" style="left:705px;top:49px;width:149px;text-align:right;padding-right:7px;border-right:1px solid #e6e6e6;">-54,979,823.88</div>
<div class="cell" style="left:853px;top:49px;width:173px;text-align:right;padding-right:7px;border-right:1px solid #e6e6e6;">0</div>
<div class="cell" style="left:1025px;top:49px;width:173px;text-align:right;padding-right:7px;border-right:1px solid #e6e6e6;">-1,733,077.58</div>
<div class="cell" style="left:1197px;top:49px;width:161px;text-align:right;padding-right:7px;border-right:1px solid #e6e6e6;">204,020,819.21</div>
<div class="abs" style="left:29px;top:70px;width:1328px;height:21px;background:#dde9f6"></div>
<div class="abs" style="left:1357px;top:90px;width:152px;height:1px;background:#f0f0f0"></div>
<div class="cell" style="left:0;top:70px;width:30px;background:#fff;border-bottom:1px solid #8a8a8a;border-right:1px solid #8a8a8a;padding-left:4px">3</div>
<div class="cell" style="left:29px;top:70px;width:89px;text-align:left;padding-left:6px;border-right:1px solid #e6e6e6;">2024</div>
<div class="cell" style="left:117px;top:70px;width:113px;text-align:left;padding-left:6px;border-right:1px solid #e6e6e6;">DHA5</div>
<div class="cell" style="left:229px;top:70px;width:181px;text-align:left;padding-left:6px;border-right:1px solid #e6e6e6;">海澜之家京东官方旗舰店</div>
<div class="cell" style="left:409px;top:70px;width:149px;text-align:right;padding-right:7px;border-right:1px solid #e6e6e6;">164,035,937.47</div>
<div class="cell" style="left:557px;top:70px;width:149px;text-align:right;padding-right:7px;border-right:1px solid #e6e6e6;">0</div>
<div class="cell" style="left:705px;top:70px;width:149px;text-align:right;padding-right:7px;border-right:1px solid #e6e6e6;">-30,280,011.41</div>
<div class="cell" style="left:853px;top:70px;width:173px;text-align:right;padding-right:7px;border-right:1px solid #e6e6e6;">0</div>
<div class="cell" style="left:1025px;top:70px;width:173px;text-align:right;padding-right:7px;border-right:1px solid #e6e6e6;">-2,491,509.58</div>
<div class="cell" style="left:1197px;top:70px;width:161px;text-align:right;padding-right:7px;border-right:1px solid #e6e6e6;">131,264,416.48</div>
<div class="abs" style="left:29px;top:91px;width:1328px;height:21px;background:#fff"></div>
<div class="abs" style="left:1357px;top:111px;width:152px;height:1px;background:#f0f0f0"></div>
<div class="cell" style="left:0;top:91px;width:30px;background:#fff;border-bottom:1px solid #8a8a8a;border-right:1px solid #8a8a8a;padding-left:4px">4</div>
<div class="cell" style="left:29px;top:91px;width:89px;text-align:left;padding-left:6px;border-right:1px solid #e6e6e6;">2024</div>
<div class="cell" style="left:117px;top:91px;width:113px;text-align:left;padding-left:6px;border-right:1px solid #e6e6e6;">DYB0</div>
<div class="cell" style="left:229px;top:91px;width:181px;text-align:left;padding-left:6px;border-right:1px solid #e6e6e6;">天猫-英氏官方旗舰店</div>
<div class="cell" style="left:409px;top:91px;width:149px;text-align:right;padding-right:7px;border-right:1px solid #e6e6e6;">99,790,762.79</div>
<div class="cell" style="left:557px;top:91px;width:149px;text-align:right;padding-right:7px;border-right:1px solid #e6e6e6;">0</div>
<div class="cell" style="left:705px;top:91px;width:149px;text-align:right;padding-right:7px;border-right:1px solid #e6e6e6;">-18,612,714.78</div>
<div class="cell" style="left:853px;top:91px;width:173px;text-align:right;padding-right:7px;border-right:1px solid #e6e6e6;">0</div>
<div class="cell" style="left:1025px;top:91px;width:173px;text-align:right;padding-right:7px;border-right:1px solid #e6e6e6;">-785,059.5</div>
<div class="cell" style="left:1197px;top:91px;width:161px;text-align:right;padding-right:7px;border-right:1px solid #e6e6e6;">80,392,988.51</div>
<div class="abs" style="left:29px;top:112px;width:1328px;height:21px;background:#dde9f6"></div>
<div class="abs" style="left:1357px;top:132px;width:152px;height:1px;background:#f0f0f0"></div>
<div class="cell" style="left:0;top:112px;width:30px;background:#fff;border-bottom:1px solid #8a8a8a;border-right:1px solid #8a8a8a;padding-left:4px">5</div>
<div class="cell" style="left:29px;top:112px;width:89px;text-align:left;padding-left:6px;border-right:1px solid #e6e6e6;">2024</div>
<div class="cell" style="left:117px;top:112px;width:113px;text-align:left;padding-left:6px;border-right:1px solid #e6e6e6;">DHRN</div>
<div class="cell" style="left:229px;top:112px;width:181px;text-align:left;padding-left:6px;border-right:1px solid #e6e6e6;">海澜之家得物旗舰店</div>
<div class="cell" style="left:409px;top:112px;width:149px;text-align:right;padding-right:7px;border-right:1px solid #e6e6e6;">91,234,696.29</div>
<div class="cell" style="left:557px;top:112px;width:149px;text-align:right;padding-right:7px;border-right:1px solid #e6e6e6;">0</div>
<div class="cell" style="left:705px;top:112px;width:149px;text-align:right;padding-right:7px;border-right:1px solid #e6e6e6;">-14,059,702.7</div>
<div class="cell" style="left:853px;top:112px;width:173px;text-align:right;padding-right:7px;border-right:1px solid #e6e6e6;">0</div>
<div class="cell" style="left:1025px;top:112px;width:173px;text-align:right;padding-right:7px;border-right:1px solid #e6e6e6;">-2,161,850.64</div>
<div class="cell" style="left:1197px;top:112px;width:161px;text-align:right;padding-right:7px;border-right:1px solid #e6e6e6;">75,013,142.95</div>
<div class="abs" style="left:29px;top:133px;width:1328px;height:21px;background:#fff"></div>
<div class="abs" style="left:1357px;top:153px;width:152px;height:1px;background:#f0f0f0"></div>
<div class="cell" style="left:0;top:133px;width:30px;background:#fff;border-bottom:1px solid #8a8a8a;border-right:1px solid #8a8a8a;padding-left:4px">6</div>
<div class="cell" style="left:29px;top:133px;width:89px;text-align:left;padding-left:6px;border-right:1px solid #e6e6e6;">2024</div>
<div class="cell" style="left:117px;top:133px;width:113px;text-align:left;padding-left:6px;border-right:1px solid #e6e6e6;">DHFS</div>
<div class="cell" style="left:229px;top:133px;width:181px;text-align:left;padding-left:6px;border-right:1px solid #e6e6e6;">海澜之家抖音六十六号店</div>
<div class="cell" style="left:409px;top:133px;width:149px;text-align:right;padding-right:7px;border-right:1px solid #e6e6e6;">61,855,797</div>
<div class="cell" style="left:557px;top:133px;width:149px;text-align:right;padding-right:7px;border-right:1px solid #e6e6e6;">0</div>
<div class="cell" style="left:705px;top:133px;width:149px;text-align:right;padding-right:7px;border-right:1px solid #e6e6e6;">-9,042,023.79</div>
<div class="cell" style="left:853px;top:133px;width:173px;text-align:right;padding-right:7px;border-right:1px solid #e6e6e6;">0</div>
<div class="cell" style="left:1025px;top:133px;width:173px;text-align:right;padding-right:7px;border-right:1px solid #e6e6e6;">-29,807.3</div>
<div class="cell" style="left:1197px;top:133px;width:161px;text-align:right;padding-right:7px;border-right:1px solid #e6e6e6;">52,783,965.91</div>
<div class="abs" style="left:29px;top:154px;width:1328px;height:21px;background:#dde9f6"></div>
<div class="abs" style="left:1357px;top:174px;width:152px;height:1px;background:#f0f0f0"></div>
<div class="cell" style="left:0;top:154px;width:30px;background:#fff;border-bottom:1px solid #8a8a8a;border-right:1px solid #8a8a8a;padding-left:4px">7</div>
<div class="cell" style="left:29px;top:154px;width:89px;text-align:left;padding-left:6px;border-right:1px solid #e6e6e6;">2024</div>
<div class="cell" style="left:117px;top:154px;width:113px;text-align:left;padding-left:6px;border-right:1px solid #e6e6e6;">DHK9</div>
<div class="cell" style="left:229px;top:154px;width:181px;text-align:left;padding-left:6px;border-right:1px solid #e6e6e6;">海澜之家抖音男子旗舰店</div>
<div class="cell" style="left:409px;top:154px;width:149px;text-align:right;padding-right:7px;border-right:1px solid #e6e6e6;">47,450,900.67</div>
<div class="cell" style="left:557px;top:154px;width:149px;text-align:right;padding-right:7px;border-right:1px solid #e6e6e6;">0</div>
<div class="cell" style="left:705px;top:154px;width:149px;text-align:right;padding-right:7px;border-right:1px solid #e6e6e6;">-6,347,394.01</div>
<div class="cell" style="left:853px;top:154px;width:173px;text-align:right;padding-right:7px;border-right:1px solid #e6e6e6;">0</div>
<div class="cell" style="left:1025px;top:154px;width:173px;text-align:right;padding-right:7px;border-right:1px solid #e6e6e6;">-12,668.66</div>
<div class="cell" style="left:1197px;top:154px;width:161px;text-align:right;padding-right:7px;border-right:1px solid #e6e6e6;">41,090,838</div>
<div class="abs" style="left:29px;top:175px;width:1328px;height:21px;background:#fff"></div>
<div class="abs" style="left:1357px;top:195px;width:152px;height:1px;background:#f0f0f0"></div>
<div class="cell" style="left:0;top:175px;width:30px;background:#fff;border-bottom:1px solid #8a8a8a;border-right:1px solid #8a8a8a;padding-left:4px">8</div>
<div class="cell" style="left:29px;top:175px;width:89px;text-align:left;padding-left:6px;border-right:1px solid #e6e6e6;">2024</div>
<div class="cell" style="left:117px;top:175px;width:113px;text-align:left;padding-left:6px;border-right:1px solid #e6e6e6;">DHU1</div>
<div class="cell" style="left:229px;top:175px;width:181px;text-align:left;padding-left:6px;border-right:1px solid #e6e6e6;">海澜之家快手恒越二十四专卖店</div>
<div class="cell" style="left:409px;top:175px;width:149px;text-align:right;padding-right:7px;border-right:1px solid #e6e6e6;">50,110,805.07</div>
<div class="cell" style="left:557px;top:175px;width:149px;text-align:right;padding-right:7px;border-right:1px solid #e6e6e6;">0</div>
<div class="cell" style="left:705px;top:175px;width:149px;text-align:right;padding-right:7px;border-right:1px solid #e6e6e6;">-13,589,489.93</div>
<div class="cell" style="left:853px;top:175px;width:173px;text-align:right;padding-right:7px;border-right:1px solid #e6e6e6;">0</div>
<div class="cell" style="left:1025px;top:175px;width:173px;text-align:right;padding-right:7px;border-right:1px solid #e6e6e6;">-32,734.43</div>
<div class="cell" style="left:1197px;top:175px;width:161px;text-align:right;padding-right:7px;border-right:1px solid #e6e6e6;">36,488,580.71</div>
<div class="abs" style="left:29px;top:196px;width:1328px;height:21px;background:#dde9f6"></div>
<div class="abs" style="left:1357px;top:216px;width:152px;height:1px;background:#f0f0f0"></div>
<div class="cell" style="left:0;top:196px;width:30px;background:#fff;border-bottom:1px solid #8a8a8a;border-right:1px solid #8a8a8a;padding-left:4px">9</div>
<div class="cell" style="left:29px;top:196px;width:89px;text-align:left;padding-left:6px;border-right:1px solid #e6e6e6;">2024</div>
<div class="cell" style="left:117px;top:196px;width:113px;text-align:left;padding-left:6px;border-right:1px solid #e6e6e6;">DHB6</div>
<div class="cell" style="left:229px;top:196px;width:181px;text-align:left;padding-left:6px;border-right:1px solid #e6e6e6;">海澜之家美团店</div>
<div class="cell" style="left:409px;top:196px;width:149px;text-align:right;padding-right:7px;border-right:1px solid #e6e6e6;">33,040,837.56</div>
<div class="cell" style="left:557px;top:196px;width:149px;text-align:right;padding-right:7px;border-right:1px solid #e6e6e6;">0</div>
<div class="cell" style="left:705px;top:196px;width:149px;text-align:right;padding-right:7px;border-right:1px solid #e6e6e6;">-1,567,289.52</div>
<div class="cell" style="left:853px;top:196px;width:173px;text-align:right;padding-right:7px;border-right:1px solid #e6e6e6;">0</div>
<div class="cell" style="left:1025px;top:196px;width:173px;text-align:right;padding-right:7px;border-right:1px solid #e6e6e6;">47,186.34</div>
<div class="cell" style="left:1197px;top:196px;width:161px;text-align:right;padding-right:7px;border-right:1px solid #e6e6e6;">31,520,734.38</div>
<div class="hc" style="left:0px;width:30px;background:#f8f8f8"></div>
<svg class="ic" style="position:absolute;left:5px;top:4px;" width="7" height="8" viewBox="0 0 7 8"><path d="M1.5 3.5V2.8A2 2 0 0 1 5.5 2.8V3.5" stroke="#f2c020" stroke-width="1.2" fill="none"/><rect x="0" y="3.5" width="7" height="4.5" rx="1" fill="#f5c018"/></svg>
<div class="hc" style="left:29px;width:89px;background:#7bb8e9"></div>
<div class="t" style="left:35px;top:7px;width:78px;height:16px;font-size:12px"><span style="position:absolute;left:0;top:2px;color:#1a8ad0;font-size:10px;line-height:12px;font-weight:bold;transform:scaleX(0.74);transform-origin:0 0;display:inline-block">ABC</span><span style="position:absolute;left:20px;top:0">年份</span></div>
<svg class="ic" style="position:absolute;left:102px;top:11px;" width="10" height="5" viewBox="0 0 10 5"><path d="M0 0H10L5.0 5Z" fill="#1a8ad4"/></svg>
<div class="hc" style="left:117px;width:113px;background:#f8f8f8"></div>
<div class="t" style="left:123px;top:7px;width:102px;height:16px;font-size:12px"><span style="position:absolute;left:0;top:2px;color:#1a8ad0;font-size:10px;line-height:12px;font-weight:bold;transform:scaleX(0.74);transform-origin:0 0;display:inline-block">ABC</span><span style="position:absolute;left:20px;top:0">店铺编码</span></div>
<svg class="ic" style="position:absolute;left:214px;top:11px;" width="10" height="5" viewBox="0 0 10 5"><path d="M0 0H10L5.0 5Z" fill="#1a8ad4"/></svg>
<div class="hc" style="left:229px;width:181px;background:#f8f8f8"></div>
<div class="t" style="left:235px;top:7px;width:170px;height:16px;font-size:12px"><span style="position:absolute;left:0;top:2px;color:#1a8ad0;font-size:10px;line-height:12px;font-weight:bold;transform:scaleX(0.74);transform-origin:0 0;display:inline-block">ABC</span><span style="position:absolute;left:20px;top:0">店铺名称</span></div>
<svg class="ic" style="position:absolute;left:394px;top:11px;" width="10" height="5" viewBox="0 0 10 5"><path d="M0 0H10L5.0 5Z" fill="#1a8ad4"/></svg>
<div class="hc" style="left:409px;width:149px;background:#f8f8f8"></div>
<div class="t" style="left:415px;top:7px;width:138px;height:16px;font-size:12px"><span style="position:absolute;left:0;top:1px;color:#1a8ad0;font-size:11px;letter-spacing:-0.4px">123</span><span style="position:absolute;left:20px;top:0">销售金额（元）</span></div>
<svg class="ic" style="position:absolute;left:542px;top:11px;" width="10" height="5" viewBox="0 0 10 5"><path d="M0 0H10L5.0 5Z" fill="#1a8ad4"/></svg>
<div class="hc" style="left:557px;width:149px;background:#f8f8f8"></div>
<div class="t" style="left:563px;top:7px;width:138px;height:16px;font-size:12px"><span style="position:absolute;left:0;top:1px;color:#1a8ad0;font-size:11px;letter-spacing:-0.4px">123</span><span style="position:absolute;left:20px;top:0">运费金额（元）</span></div>
<svg class="ic" style="position:absolute;left:690px;top:11px;" width="10" height="5" viewBox="0 0 10 5"><path d="M0 0H10L5.0 5Z" fill="#1a8ad4"/></svg>
<div class="hc" style="left:705px;width:149px;background:#f8f8f8"></div>
<div class="t" style="left:711px;top:7px;width:138px;height:16px;font-size:12px"><span style="position:absolute;left:0;top:1px;color:#1a8ad0;font-size:11px;letter-spacing:-0.4px">123</span><span style="position:absolute;left:20px;top:0">退货金额（元）</span></div>
<svg class="ic" style="position:absolute;left:838px;top:11px;" width="10" height="5" viewBox="0 0 10 5"><path d="M0 0H10L5.0 5Z" fill="#1a8ad4"/></svg>
<div class="hc" style="left:853px;width:173px;background:#f8f8f8"></div>
<div class="t" style="left:859px;top:7px;width:162px;height:16px;font-size:12px"><span style="position:absolute;left:0;top:1px;color:#1a8ad0;font-size:11px;letter-spacing:-0.4px">123</span><span style="position:absolute;left:20px;top:0">退货运费金额（元）</span></div>
<svg class="ic" style="position:absolute;left:1010px;top:11px;" width="10" height="5" viewBox="0 0 10 5"><path d="M0 0H10L5.0 5Z" fill="#1a8ad4"/></svg>
<div class="hc" style="left:1025px;width:173px;background:#f8f8f8"></div>
<div class="t" style="left:1031px;top:7px;width:162px;height:16px;font-size:12px"><span style="position:absolute;left:0;top:1px;color:#1a8ad0;font-size:11px;letter-spacing:-0.4px">123</span><span style="position:absolute;left:20px;top:0">发货调整金额（元）</span></div>
<svg class="ic" style="position:absolute;left:1182px;top:11px;" width="10" height="5" viewBox="0 0 10 5"><path d="M0 0H10L5.0 5Z" fill="#1a8ad4"/></svg>
<div class="hc" style="left:1197px;width:161px;background:#f8f8f8"></div>
<div class="t" style="left:1203px;top:7px;width:150px;height:16px;font-size:12px"><span style="position:absolute;left:0;top:1px;color:#1a8ad0;font-size:11px;letter-spacing:-0.4px">123</span><span style="position:absolute;left:20px;top:0">净销售金额（元）</span></div>
<svg class="ic" style="position:absolute;left:1342px;top:11px;" width="10" height="5" viewBox="0 0 10 5"><path d="M0 0H10L5.0 5Z" fill="#1a8ad4"/></svg>
</div>
<svg class="ic" style="position:absolute;left:1561px;top:590px;" width="9" height="6" viewBox="0 0 9 6"><path d="M0.5 5L4.5 1L8.5 5" stroke="#333" stroke-width="1.3" fill="none"/></svg>
<div class="abs" style="left:1559px;top:600px;width:14px;height:18px;background:#cdd0cd"></div>
<svg class="ic" style="position:absolute;left:1561px;top:791px;" width="9" height="6" viewBox="0 0 9 6"><path d="M0.5 1L4.5 5L8.5 1" stroke="#333" stroke-width="1.3" fill="none"/></svg>
<svg class="ic" style="position:absolute;left:1579px;top:592px;" width="15" height="15" viewBox="0 0 15 15"><rect x="0.6" y="0.6" width="13.8" height="13.8" stroke="#1a8ad4" stroke-width="1.2" fill="#fff"/><rect x="7" y="0.6" width="7.4" height="8" fill="#1a8ad4"/><circle cx="4" cy="11" r="2.2" fill="#1a8ad4"/></svg>
<div class="t" style="left:1575px;top:613px;font-size:13px;transform:rotate(90deg);transform-origin:center;width:26px;height:15px;line-height:15px">面板</div>
<svg class="ic" style="position:absolute;left:1579px;top:651px;" width="14" height="14" viewBox="0 0 14 14"><rect x="0.6" y="0.6" width="12.8" height="12.8" stroke="#1a8ad4" stroke-width="1.2" fill="#fff"/><path d="M0.6 3.5H13.4" stroke="#1a8ad4" stroke-width="1.2"/><rect x="2" y="5" width="10" height="7" fill="#8ec8f0"/><path d="M2 6.5h10M2 9h10M4.5 5v7M7 5v7M9.5 5v7" stroke="#fff" stroke-width="0.8"/></svg>
<svg class="ic" style="position:absolute;left:1579px;top:673px;" width="15" height="15" viewBox="0 0 15 15"><circle cx="7.5" cy="7.5" r="6.8" stroke="#1a8ad4" stroke-width="1.3" fill="none"/><circle cx="5.2" cy="5.2" r="1.2" fill="#1a8ad4"/><circle cx="9.8" cy="5.2" r="1.2" fill="#1a8ad4"/><circle cx="5.2" cy="9.8" r="1.2" fill="#1a8ad4"/><circle cx="9.8" cy="9.8" r="1.2" fill="#1a8ad4"/></svg>
<svg class="ic" style="position:absolute;left:1579px;top:694px;" width="15" height="16" viewBox="0 0 15 16"><rect x="0.6" y="4.6" width="13.8" height="10.8" stroke="#1a8ad4" stroke-width="1.2" fill="#fff"/><path d="M0.6 8H14.4M0.6 11.5H14.4M4.5 4.6V15.4M9.8 4.6V15.4" stroke="#1a8ad4" stroke-width="1.1"/><path d="M7.5 0V4M6 2.5L7.5 4L9 2.5" stroke="#f08c1c" stroke-width="1.2" fill="none"/><rect x="6" y="4.6" width="3" height="10.8" fill="#f08c1c" opacity="0.8"/></svg>
<svg class="ic" style="position:absolute;left:1579px;top:716px;" width="15" height="15" viewBox="0 0 15 15"><rect x="0.6" y="0.6" width="13.8" height="13.8" stroke="#1a8ad4" stroke-width="1.2" fill="#fff"/><rect x="0.6" y="0.6" width="13.8" height="3" fill="#1a8ad4"/><rect x="2.5" y="5.5" width="5" height="4" fill="#1a8ad4"/><path d="M9.5 9.5h4M11.5 9.5v4M9.5 13.5h4" stroke="#1a8ad4" stroke-width="1.1"/></svg>
<svg class="ic" style="position:absolute;left:1579px;top:738px;" width="15" height="15" viewBox="0 0 15 15"><circle cx="3.7" cy="3.7" r="3.2" fill="#1a8ad4"/><path d="M2 3.7h3.4" stroke="#fff"/><circle cx="11.3" cy="3.7" r="3.2" fill="#1a8ad4"/><path d="M9.6 3.7h3.4M11.3 2v3.4" stroke="#fff"/><circle cx="3.7" cy="11.3" r="3.2" fill="#1a8ad4"/><path d="M2.4 10l2.6 2.6M5 10l-2.6 2.6" stroke="#fff"/><circle cx="11.3" cy="11.3" r="3.2" fill="#f08c1c"/><path d="M9.6 10.5h3.4M9.6 12.1h3.4" stroke="#fff"/></svg>
<svg class="ic" style="position:absolute;left:1578px;top:815px;" width="17" height="16" viewBox="0 0 17 16"><rect x="0" y="3" width="5" height="13" rx="1" fill="#1a8ad4"/><path d="M7 7V14.5H16" stroke="#1a8ad4" stroke-width="2" fill="none"/><path d="M8 4 Q12 1 14 6" stroke="#1a8ad4" stroke-width="1.6" fill="none"/><path d="M12 6.5L15 6.5L14.5 3Z" fill="#1a8ad4"/></svg>
<svg class="ic" style="position:absolute;left:59px;top:810px;" width="15" height="15" viewBox="0 0 15 15"><path d="M2.5 8.5 A5 5 0 0 1 10.5 3" stroke="#1a8ad4" stroke-width="2" fill="none"/><path d="M12.5 6.5 A5 5 0 0 1 4.5 12" stroke="#1a8ad4" stroke-width="2" fill="none"/><path d="M9 0.5L12.8 3.2L9 5.5Z M6 9.5L2.2 11.8L6 14.5Z" fill="#1a8ad4"/><path d="M5 7.5 L7.5 5 L10 7.5 L7.5 10Z" stroke="#1a8ad4" stroke-width="1" fill="none"/></svg>
<div class="t" style="left:79px;top:810px;font-size:12px">刷新</div>
<svg class="ic" style="position:absolute;left:118px;top:816px;" width="8" height="4" viewBox="0 0 8 4"><path d="M0 0H8L4.0 4Z" fill="#333"/></svg>
<svg class="ic" style="position:absolute;left:135px;top:810px;" width="2" height="14" viewBox="0 0 2 14"><rect x="0" y="0" width="2" height="2" fill="#b3a88f"/><rect x="0" y="4" width="2" height="2" fill="#b3a88f"/><rect x="0" y="8" width="2" height="2" fill="#b3a88f"/><rect x="0" y="12" width="2" height="2" fill="#b3a88f"/></svg>
<svg class="ic" style="position:absolute;left:146px;top:810px;" width="15" height="15" viewBox="0 0 15 15"><circle cx="7.5" cy="7.5" r="6.8" stroke="#a8a8a8" stroke-width="1.2" fill="none"/><path d="M4 7.5L6.5 10L11 5" stroke="#a8a8a8" stroke-width="1.3" fill="none"/></svg>
<div class="t" style="left:166px;top:810px;font-size:12px;color:#a0a0a0">保存</div>
<svg class="ic" style="position:absolute;left:204px;top:816px;" width="8" height="4" viewBox="0 0 8 4"><path d="M0 0H8L4.0 4Z" fill="#999"/></svg>
<svg class="ic" style="position:absolute;left:221px;top:811px;" width="13" height="13" viewBox="0 0 13 13"><rect x="0.6" y="0.6" width="11.8" height="11.8" stroke="#a8a8a8" stroke-width="1.2" fill="none"/><path d="M3.5 3.5L9.5 9.5M9.5 3.5L3.5 9.5" stroke="#a8a8a8" stroke-width="1"/></svg>
<div class="t" style="left:239px;top:810px;font-size:12px;color:#a0a0a0">取消</div>
<div style="position:absolute;left:273px;top:805px;width:1px;height:26px;background:#7a7a7a"></div>
<svg class="ic" style="position:absolute;left:284px;top:811px;" width="15" height="14" viewBox="0 0 15 14"><path d="M0 1.5H14M0 6H10M0 10.5H6" stroke="#1a8ad4" stroke-width="1.6"/><path d="M8 13.5L13.5 8" stroke="#1a8ad4" stroke-width="2"/></svg>
<svg class="ic" style="position:absolute;left:307px;top:811px;" width="16" height="14" viewBox="0 0 16 14"><path d="M0 1.5H14M0 6H7M0 10.5H7M11 5V14M6.5 9.5H15.5" stroke="#a8a8a8" stroke-width="1.6"/></svg>
<svg class="ic" style="position:absolute;left:332px;top:811px;" width="15" height="14" viewBox="0 0 15 14"><path d="M0 1.5H14" stroke="#a8a8a8" stroke-width="1.4"/><path d="M0 6H2M0 10.5H2" stroke="#a8a8a8" stroke-width="1.4"/><path d="M6 4.5 Q4 8 6 12M12 4.5 Q14 8 12 12M9 6V11M6.5 8.5H11.5" stroke="#a8a8a8" stroke-width="1.2" fill="none"/></svg>
<svg class="ic" style="position:absolute;left:356px;top:811px;" width="15" height="14" viewBox="0 0 15 14"><path d="M0 1.5H14M0 6H5M0 10.5H14M7 6H14" stroke="#a8a8a8" stroke-width="1.6"/></svg>
<svg class="ic" style="position:absolute;left:380px;top:810px;" width="2" height="14" viewBox="0 0 2 14"><rect x="0" y="0" width="2" height="2" fill="#b3a88f"/><rect x="0" y="4" width="2" height="2" fill="#b3a88f"/><rect x="0" y="8" width="2" height="2" fill="#b3a88f"/><rect x="0" y="12" width="2" height="2" fill="#b3a88f"/></svg>
<svg class="ic" style="position:absolute;left:388px;top:811px;" width="12" height="14" viewBox="0 0 12 14"><path d="M1 0V14" stroke="#a8a8a8" stroke-width="1.8"/><path d="M11 0.5L4.5 7L11 13.5" stroke="#a8a8a8" stroke-width="1.8" fill="none"/></svg>
<svg class="ic" style="position:absolute;left:412px;top:811px;" width="9" height="14" viewBox="0 0 9 14"><path d="M8 0.5L1.5 7L8 13.5" stroke="#a8a8a8" stroke-width="1.8" fill="none"/></svg>
<svg class="ic" style="position:absolute;left:436px;top:811px;" width="9" height="14" viewBox="0 0 9 14"><path d="M1 0.5L7.5 7L1 13.5" stroke="#1a8ad4" stroke-width="1.8" fill="none"/></svg>
<svg class="ic" style="position:absolute;left:457px;top:811px;" width="13" height="14" viewBox="0 0 13 14"><path d="M1 0.5L7.5 7L1 13.5" stroke="#1a8ad4" stroke-width="1.8" fill="none"/><path d="M11.5 0V14" stroke="#1a8ad4" stroke-width="1.8"/></svg>
<svg class="ic" style="position:absolute;left:479px;top:810px;" width="15" height="15" viewBox="0 0 15 15"><path d="M0.7 4V0.7H4M11 0.7H14.3V4M14.3 11V14.3H11M4 14.3H0.7V11" stroke="#1a8ad4" stroke-width="1.3" fill="none"/><path d="M4.5 3.5H8.5L10.5 5.5V11.5H4.5Z" fill="#7cc8f0" stroke="#1a8ad4" stroke-width="1"/></svg>
<svg class="ic" style="position:absolute;left:503px;top:810px;" width="2" height="14" viewBox="0 0 2 14"><rect x="0" y="0" width="2" height="2" fill="#b3a88f"/><rect x="0" y="4" width="2" height="2" fill="#b3a88f"/><rect x="0" y="8" width="2" height="2" fill="#b3a88f"/><rect x="0" y="12" width="2" height="2" fill="#b3a88f"/></svg>
<svg class="ic" style="position:absolute;left:518px;top:810px;" width="13" height="15" viewBox="0 0 13 15"><path d="M6.5 11V1.5M3 5L6.5 1.5L10 5" stroke="#1a8ad4" stroke-width="1.6" fill="none"/><path d="M0.8 8V14.2H12.2V8" stroke="#1a8ad4" stroke-width="1.5" fill="none"/></svg>
<div class="t" style="left:536px;top:810px;font-size:12px">导出数据...</div>
<svg class="ic" style="position:absolute;left:608px;top:816px;" width="8" height="4" viewBox="0 0 8 4"><path d="M0 0H8L4.0 4Z" fill="#333"/></svg>
<svg class="ic" style="position:absolute;left:625px;top:810px;" width="2" height="14" viewBox="0 0 2 14"><rect x="0" y="0" width="2" height="2" fill="#b3a88f"/><rect x="0" y="4" width="2" height="2" fill="#b3a88f"/><rect x="0" y="8" width="2" height="2" fill="#b3a88f"/><rect x="0" y="12" width="2" height="2" fill="#b3a88f"/></svg>
<svg class="ic" style="position:absolute;left:632px;top:810px;" width="14" height="14" viewBox="0 0 14 14"><rect x="5.6" y="0" width="2.8" height="3.2" fill="#1a8ad4" transform="rotate(0 7 7)"/><rect x="5.6" y="0" width="2.8" height="3.2" fill="#1a8ad4" transform="rotate(45 7 7)"/><rect x="5.6" y="0" width="2.8" height="3.2" fill="#1a8ad4" transform="rotate(90 7 7)"/><rect x="5.6" y="0" width="2.8" height="3.2" fill="#1a8ad4" transform="rotate(135 7 7)"/><rect x="5.6" y="0" width="2.8" height="3.2" fill="#1a8ad4" transform="rotate(180 7 7)"/><rect x="5.6" y="0" width="2.8" height="3.2" fill="#1a8ad4" transform="rotate(225 7 7)"/><rect x="5.6" y="0" width="2.8" height="3.2" fill="#1a8ad4" transform="rotate(270 7 7)"/><rect x="5.6" y="0" width="2.8" height="3.2" fill="#1a8ad4" transform="rotate(315 7 7)"/><circle cx="7" cy="7" r="5" fill="#1a8ad4"/><circle cx="7" cy="7" r="2.2" fill="#9bd4f5"/></svg>
<div class="abs" style="left:654px;top:806px;width:54px;height:22px;background:#fff;border:1px solid #909090"></div>
<div class="t" style="left:659px;top:810px;font-size:12px">200</div>
<svg class="ic" style="position:absolute;left:714px;top:810px;" width="15" height="15" viewBox="0 0 15 15"><path d="M1.5 0.8L7.5 6L13.5 0.8M7.5 3.5V11M4.5 8.5L7.5 11.5L10.5 8.5" stroke="#1a8ad4" stroke-width="1.4" fill="none"/><path d="M0.8 10V14.2H14.2V10" stroke="#1a8ad4" stroke-width="1.4" fill="none"/></svg>
<div class="t" style="left:737px;top:810px;font-size:12px">827</div>
<svg class="ic" style="position:absolute;left:766px;top:810px;" width="2" height="14" viewBox="0 0 2 14"><rect x="0" y="0" width="2" height="2" fill="#b3a88f"/><rect x="0" y="4" width="2" height="2" fill="#b3a88f"/><rect x="0" y="8" width="2" height="2" fill="#b3a88f"/><rect x="0" y="12" width="2" height="2" fill="#b3a88f"/></svg>
<svg class="ic" style="position:absolute;left:793px;top:817px;" width="5" height="2" viewBox="0 0 5 2"><rect x="0" y="0" width="2" height="2" fill="#777"/><rect x="3" y="0" width="2" height="2" fill="#777"/></svg>
<div class="t" style="left:812px;top:810px;font-size:12px;letter-spacing:0.28px">200 行已获取 - 8.622s (7ms 获取), 2025-10-21 20:07:48</div>
<div style="position:absolute;left:778px;top:834px;width:1px;height:22px;background:#a0a0a0"></div>
<div style="position:absolute;left:814px;top:834px;width:1px;height:22px;background:#a0a0a0"></div>
<div style="position:absolute;left:841px;top:834px;width:1px;height:22px;background:#a0a0a0"></div>
<div style="position:absolute;left:975px;top:834px;width:1px;height:22px;background:#a0a0a0"></div>
<div style="position:absolute;left:1103px;top:834px;width:1px;height:22px;background:#a0a0a0"></div>
<div style="position:absolute;left:1231px;top:834px;width:1px;height:22px;background:#a0a0a0"></div>
<div class="t" style="left:786px;top:838px;font-size:12px">CST</div>
<div class="t" style="left:821px;top:838px;font-size:12px">zh</div>
<div class="t" style="left:849px;top:838px;font-size:12px">可写</div>
<div class="t" style="left:983px;top:838px;font-size:12px">智能插入</div>
<div class="t" style="left:1111px;top:838px;font-size:12px">239 : 1 : 9563</div>
<div class="t" style="left:1239px;top:838px;font-size:12px">Sel: 0 | 0</div>
<svg class="ic" style="position:absolute;left:1316px;top:839px;" width="2" height="14" viewBox="0 0 2 14"><rect x="0" y="0" width="2" height="2" fill="#b3a88f"/><rect x="0" y="4" width="2" height="2" fill="#b3a88f"/><rect x="0" y="8" width="2" height="2" fill="#b3a88f"/><rect x="0" y="12" width="2" height="2" fill="#b3a88f"/></svg>
<div class="abs" style="left:0;top:860px;width:1600px;height:40px;background:#000"></div>
<svg class="ic" style="position:absolute;left:16px;top:872px;" width="16" height="16" viewBox="0 0 16 16"><path d="M0 2.2L6.5 1.3V7.6H0Z M7.5 1.1L16 0V7.6H7.5Z M0 8.6H6.5V14.8L0 13.9Z M7.5 8.6H16V16L7.5 14.9Z" fill="#fff"/></svg>
<svg class="ic" style="position:absolute;left:64px;top:872px;" width="17" height="17" viewBox="0 0 17 17"><circle cx="10.5" cy="6" r="5.2" stroke="#fff" stroke-width="1.2" fill="none"/><path d="M6.8 9.8L0.5 16.2" stroke="#fff" stroke-width="1.3"/></svg>
<svg class="ic" style="position:absolute;left:112px;top:872px;" width="16" height="16" viewBox="0 0 16 16"><rect x="0.6" y="4" width="10" height="8" stroke="#fff" stroke-width="1.2" fill="none"/><path d="M0.6 0.6V2M0.6 0.6H10.6V2M0.6 16V14.5H10.6V16M14.5 0V16" stroke="#fff" stroke-width="1.2" fill="none"/><rect x="13" y="5" width="3" height="3" fill="#fff"/></svg>
<svg class="ic" style="position:absolute;left:160px;top:868px;" width="23" height="24" viewBox="0 0 23 24"><ellipse cx="11.5" cy="12" rx="10.5" ry="5" transform="rotate(-35 11.5 12)" stroke="#f0c030" stroke-width="1.6" fill="none"/><circle cx="11.5" cy="12.5" r="7.5" fill="#38b8f0"/><path d="M5.5 12.5H17.5A6 6 0 0 0 5.5 12.5Z" fill="#e8f8ff"/><rect x="7.5" y="12" width="9" height="2.2" fill="#38b8f0"/><path d="M6.5 14 Q8 18 12 18 Q15 18 16.5 16" stroke="#e8f8ff" stroke-width="2.2" fill="none"/><path d="M8 9.5 Q11.5 6.5 15 9.5V11.5H8Z" fill="#38b8f0"/></svg>
<svg class="ic" style="position:absolute;left:209px;top:871px;" width="21" height="18" viewBox="0 0 21 18"><path d="M0.5 2.5Q0.5 1 2 1H7L8.5 2.5H19.5Q21 2.5 21 4V16Q21 17 19.5 17H2Q0.5 17 0.5 15.5Z" fill="#fbe28a" stroke="#e8b840" stroke-width="0.8"/><path d="M1 4H20" stroke="#f0c850" stroke-width="0.8"/><path d="M4 18V12.5Q4 10.5 6 10.5H15Q17 10.5 17 12.5V18H13.5V14H7.5V18Z" fill="#2a9ef0"/><rect x="2" y="1.5" width="4" height="1.2" fill="#3cb0f0"/></svg>
<svg class="ic" style="position:absolute;left:257px;top:868px;" width="24" height="24" viewBox="0 0 24 24"><circle cx="12" cy="12" r="10.8" fill="#fff" stroke="#3cb4b4" stroke-width="2.1"/><path d="M10.2 17.2 Q12.5 15.6 15.5 17 L17.8 15.8 Q17.6 19.5 16.2 23 Q12.5 24 10 22.8 Z" fill="#3a2e28"/><path d="M5.8 12.8 Q7 11 8.6 11.8 L7.8 17.5 Q6.4 16.5 5.8 12.8Z" fill="#3a2e28"/><ellipse cx="18.8" cy="11.8" rx="2" ry="1.3" fill="#2a2018"/><circle cx="13.5" cy="10.8" r="0.9" fill="#2a2018"/><path d="M6.8 11.8 Q10 7.3 15 7" stroke="#666" stroke-width="0.7" fill="none"/><path d="M17 14.5 L16.5 18" stroke="#3a2e28" stroke-width="0.8"/></svg>
<div class="abs" style="left:294px;top:860px;width:48px;height:40px;background:#333"></div>
<div class="abs" style="left:294px;top:898px;width:48px;height:2px;background:#76b9ed"></div>
<svg class="ic" style="position:absolute;left:306px;top:868px;" width="24" height="24" viewBox="0 0 24 24"><circle cx="12" cy="12" r="10.8" fill="#fff" stroke="#3cb4b4" stroke-width="2.1"/><path d="M10.2 17.2 Q12.5 15.6 15.5 17 L17.8 15.8 Q17.6 19.5 16.2 23 Q12.5 24 10 22.8 Z" fill="#3a2e28"/><path d="M5.8 12.8 Q7 11 8.6 11.8 L7.8 17.5 Q6.4 16.5 5.8 12.8Z" fill="#3a2e28"/><ellipse cx="18.8" cy="11.8" rx="2" ry="1.3" fill="#2a2018"/><circle cx="13.5" cy="10.8" r="0.9" fill="#2a2018"/><path d="M6.8 11.8 Q10 7.3 15 7" stroke="#666" stroke-width="0.7" fill="none"/><path d="M17 14.5 L16.5 18" stroke="#3a2e28" stroke-width="0.8"/></svg>
<svg class="ic" style="position:absolute;left:1348px;top:876px;" width="13" height="8" viewBox="0 0 13 8"><path d="M0.5 7L6.5 1L12.5 7" stroke="#fff" stroke-width="1.2" fill="none"/></svg>
<svg class="ic" style="position:absolute;left:1372px;top:872px;" width="14" height="17" viewBox="0 0 14 17"><rect x="2" y="0.6" width="5" height="3.5" stroke="#fff" stroke-width="1" fill="none"/><rect x="0.6" y="4" width="7.8" height="12" rx="1" stroke="#fff" stroke-width="1.1" fill="none"/><path d="M8.5 14L10 15.5L13.5 12" stroke="#aaa" stroke-width="1" fill="none"/></svg>
<svg class="ic" style="position:absolute;left:1394px;top:874px;" width="17" height="14" viewBox="0 0 17 14"><rect x="4" y="0.6" width="12.4" height="9" stroke="#fff" stroke-width="1.1" fill="none"/><rect x="0.6" y="0.6" width="4" height="3.5" stroke="#fff" stroke-width="1" fill="#000"/><path d="M10 9.6V12M6 12.8H14M2.5 4V12.8H6" stroke="#fff" stroke-width="1.1" fill="none"/></svg>
<svg class="ic" style="position:absolute;left:1418px;top:876px;" width="17" height="12" viewBox="0 0 17 12"><path d="M0.6 3.5H3.5L7 0.8V11.2L3.5 8.5H0.6Z" stroke="#fff" stroke-width="1.1" fill="none"/><path d="M9.5 3.5Q11 6 9.5 8.5M12 1.8Q14.5 6 12 10.2M14.5 0.5Q17.5 6 14.5 11.5" stroke="#fff" stroke-width="1.1" fill="none"/></svg>
<div class="t" style="left:1443px;top:872px;font-size:12.5px;color:#fff">ENG</div>
<div class="t" style="left:1495px;top:863px;font-size:12.5px;color:#fff">20:07</div>
<div class="t" style="left:1477px;top:882px;font-size:13px;color:#fff">2025/10/21</div>
<svg class="ic" style="position:absolute;left:1559px;top:872px;" width="17" height="16" viewBox="0 0 17 16"><path d="M0.6 0.6H16.4V12.5H10.5L8.5 15.2L6.5 12.5H0.6Z" stroke="#fff" stroke-width="1.1" fill="none"/></svg>
<div class="abs" style="left:1596px;top:860px;width:1px;height:40px;background:#555"></div>
<div class="wm" style="left:-303.9px;top:-165.5px"><div style="height:23.6px">audit审计01(Audit1)</div><div style="height:23.6px">audit-172.18.210.237</div></div>
<div class="wm" style="left:-3.2px;top:-165.5px"><div style="height:23.6px">audit审计01(Audit1)</div><div style="height:23.6px">audit-172.18.210.237</div></div>
<div class="wm" style="left:297.5px;top:-165.5px"><div style="height:23.6px">audit审计01(Audit1)</div><div style="height:23.6px">audit-172.18.210.237</div></div>
<div class="wm" style="left:598.2px;top:-165.5px"><div style="height:23.6px">audit审计01(Audit1)</div><div style="height:23.6px">audit-172.18.210.237</div></div>
<div class="wm" style="left:898.9px;top:-165.5px"><div style="height:23.6px">audit审计01(Audit1)</div><div style="height:23.6px">audit-172.18.210.237</div></div>
<div class="wm" style="left:1199.6px;top:-165.5px"><div style="height:23.6px">audit审计01(Audit1)</div><div style="height:23.6px">audit-172.18.210.237</div></div>
<div class="wm" style="left:1500.3px;top:-165.5px"><div style="height:23.6px">audit审计01(Audit1)</div><div style="height:23.6px">audit-172.18.210.237</div></div>
<div class="wm" style="left:1801.0px;top:-165.5px"><div style="height:23.6px">audit审计01(Audit1)</div><div style="height:23.6px">audit-172.18.210.237</div></div>
<div class="wm" style="left:-303.9px;top:134.3px"><div style="height:23.6px">audit审计01(Audit1)</div><div style="height:23.6px">audit-172.18.210.237</div></div>
<div class="wm" style="left:-3.2px;top:134.3px"><div style="height:23.6px">audit审计01(Audit1)</div><div style="height:23.6px">audit-172.18.210.237</div></div>
<div class="wm" style="left:297.5px;top:134.3px"><div style="height:23.6px">audit审计01(Audit1)</div><div style="height:23.6px">audit-172.18.210.237</div></div>
<div class="wm" style="left:598.2px;top:134.3px"><div style="height:23.6px">audit审计01(Audit1)</div><div style="height:23.6px">audit-172.18.210.237</div></div>
<div class="wm" style="left:898.9px;top:134.3px"><div style="height:23.6px">audit审计01(Audit1)</div><div style="height:23.6px">audit-172.18.210.237</div></div>
<div class="wm" style="left:1199.6px;top:134.3px"><div style="height:23.6px">audit审计01(Audit1)</div><div style="height:23.6px">audit-172.18.210.237</div></div>
<div class="wm" style="left:1500.3px;top:134.3px"><div style="height:23.6px">audit审计01(Audit1)</div><div style="height:23.6px">audit-172.18.210.237</div></div>
<div class="wm" style="left:1801.0px;top:134.3px"><div style="height:23.6px">audit审计01(Audit1)</div><div style="height:23.6px">audit-172.18.210.237</div></div>
<div class="wm" style="left:-303.9px;top:434.1px"><div style="height:23.6px">audit审计01(Audit1)</div><div style="height:23.6px">audit-172.18.210.237</div></div>
<div class="wm" style="left:-3.2px;top:434.1px"><div style="height:23.6px">audit审计01(Audit1)</div><div style="height:23.6px">audit-172.18.210.237</div></div>
<div class="wm" style="left:297.5px;top:434.1px"><div style="height:23.6px">audit审计01(Audit1)</div><div style="height:23.6px">audit-172.18.210.237</div></div>
<div class="wm" style="left:598.2px;top:434.1px"><div style="height:23.6px">audit审计01(Audit1)</div><div style="height:23.6px">audit-172.18.210.237</div></div>
<div class="wm" style="left:898.9px;top:434.1px"><div style="height:23.6px">audit审计01(Audit1)</div><div style="height:23.6px">audit-172.18.210.237</div></div>
<div class="wm" style="left:1199.6px;top:434.1px"><div style="height:23.6px">audit审计01(Audit1)</div><div style="height:23.6px">audit-172.18.210.237</div></div>
<div class="wm" style="left:1500.3px;top:434.1px"><div style="height:23.6px">audit审计01(Audit1)</div><div style="height:23.6px">audit-172.18.210.237</div></div>
<div class="wm" style="left:1801.0px;top:434.1px"><div style="height:23.6px">audit审计01(Audit1)</div><div style="height:23.6px">audit-172.18.210.237</div></div>
<div class="wm" style="left:-303.9px;top:733.9px"><div style="height:23.6px">audit审计01(Audit1)</div><div style="height:23.6px">audit-172.18.210.237</div></div>
<div class="wm" style="left:-3.2px;top:733.9px"><div style="height:23.6px">audit审计01(Audit1)</div><div style="height:23.6px">audit-172.18.210.237</div></div>
<div class="wm" style="left:297.5px;top:733.9px"><div style="height:23.6px">audit审计01(Audit1)</div><div style="height:23.6px">audit-172.18.210.237</div></div>
<div class="wm" style="left:598.2px;top:733.9px"><div style="height:23.6px">audit审计01(Audit1)</div><div style="height:23.6px">audit-172.18.210.237</div></div>
<div class="wm" style="left:898.9px;top:733.9px"><div style="height:23.6px">audit审计01(Audit1)</div><div style="height:23.6px">audit-172.18.210.237</div></div>
<div class="wm" style="left:1199.6px;top:733.9px"><div style="height:23.6px">audit审计01(Audit1)</div><div style="height:23.6px">audit-172.18.210.237</div></div>
<div class="wm" style="left:1500.3px;top:733.9px"><div style="height:23.6px">audit审计01(Audit1)</div><div style="height:23.6px">audit-172.18.210.237</div></div>
<div class="wm" style="left:1801.0px;top:733.9px"><div style="height:23.6px">audit审计01(Audit1)</div><div style="height:23.6px">audit-172.18.210.237</div></div>
<div class="wm" style="left:-303.9px;top:1033.7px"><div style="height:23.6px">audit审计01(Audit1)</div><div style="height:23.6px">audit-172.18.210.237</div></div>
<div class="wm" style="left:-3.2px;top:1033.7px"><div style="height:23.6px">audit审计01(Audit1)</div><div style="height:23.6px">audit-172.18.210.237</div></div>
<div class="wm" style="left:297.5px;top:1033.7px"><div style="height:23.6px">audit审计01(Audit1)</div><div style="height:23.6px">audit-172.18.210.237</div></div>
<div class="wm" style="left:598.2px;top:1033.7px"><div style="height:23.6px">audit审计01(Audit1)</div><div style="height:23.6px">audit-172.18.210.237</div></div>
<div class="wm" style="left:898.9px;top:1033.7px"><div style="height:23.6px">audit审计01(Audit1)</div><div style="height:23.6px">audit-172.18.210.237</div></div>
<div class="wm" style="left:1199.6px;top:1033.7px"><div style="height:23.6px">audit审计01(Audit1)</div><div style="height:23.6px">audit-172.18.210.237</div></div>
<div class="wm" style="left:1500.3px;top:1033.7px"><div style="height:23.6px">audit审计01(Audit1)</div><div style="height:23.6px">audit-172.18.210.237</div></div>
<div class="wm" style="left:1801.0px;top:1033.7px"><div style="height:23.6px">audit审计01(Audit1)</div><div style="height:23.6px">audit-172.18.210.237</div></div>
</body></html>
